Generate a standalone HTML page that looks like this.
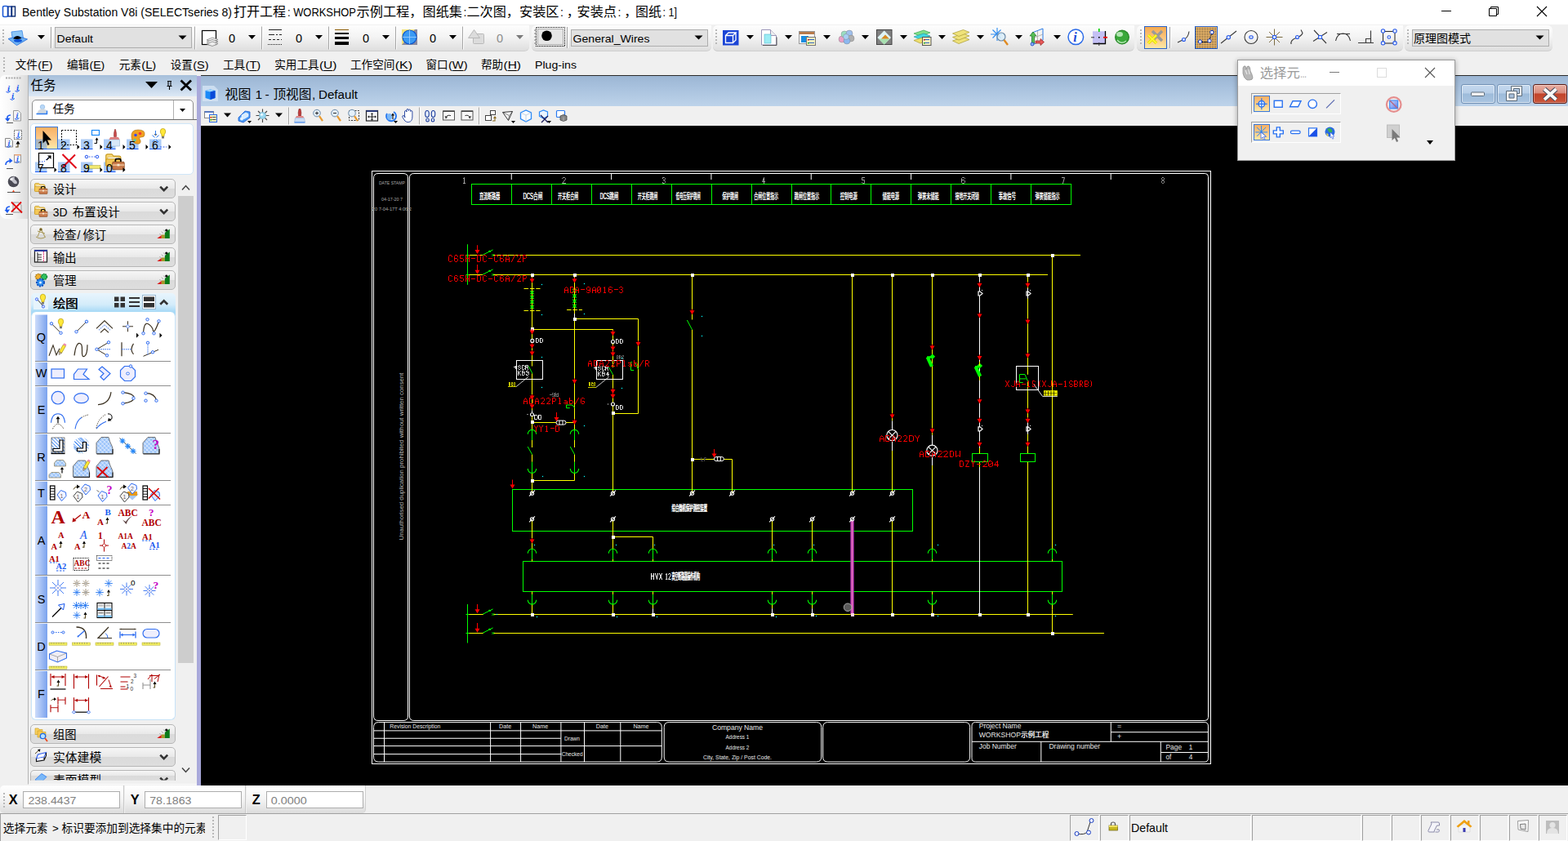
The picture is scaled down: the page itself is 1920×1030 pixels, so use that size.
<!DOCTYPE html>
<html><head><meta charset="utf-8"><title>Bentley Substation V8i</title>
<style>
html,body{margin:0;padding:0;background:#f0f0f0;}
body{width:1920px;height:1030px;overflow:hidden;position:relative;font-family:"Liberation Sans","Noto Sans CJK SC",sans-serif;}
#root{position:absolute;left:0;top:0;width:1920px;height:1030px;overflow:hidden;background:#f0f0f0;}
#root div{position:absolute;box-sizing:border-box;}
svg.L{position:absolute;left:0;top:0;pointer-events:none;overflow:hidden;font-family:"Liberation Sans","Noto Sans CJK SC",sans-serif;}
svg text{white-space:pre;}
</style></head><body><div id="root">
<div style="left:0px;top:0px;width:1920px;height:30px;background:#fff"></div>
<div style="left:0px;top:30px;width:1920px;height:63px;background:#f0f0f0"></div>
<div style="left:-6px;top:31px;width:654px;height:32px;background:linear-gradient(#fdfdfd 0%,#f4f4f4 45%,#dedede 100%);border-bottom:1px solid #cfcfcf;border-radius:0 0 6px 0"></div>
<div style="left:651px;top:31px;width:220px;height:32px;background:linear-gradient(#fdfdfd 0%,#f4f4f4 45%,#dedede 100%);border-bottom:1px solid #cfcfcf;border-radius:6px 0 6px 6px"></div>
<div style="left:873px;top:31px;width:146px;height:32px;background:linear-gradient(#fdfdfd 0%,#f4f4f4 45%,#dedede 100%);border-bottom:1px solid #cfcfcf;border-radius:6px 0 0 6px"></div>
<div style="left:873px;top:31px;width:516px;height:32px;background:linear-gradient(#fdfdfd 0%,#f4f4f4 45%,#dedede 100%);border-bottom:1px solid #cfcfcf;border-radius:6px 0 6px 6px"></div>
<div style="left:1392px;top:31px;width:326px;height:32px;background:linear-gradient(#fdfdfd 0%,#f4f4f4 45%,#dedede 100%);border-bottom:1px solid #cfcfcf;border-radius:6px 0 6px 6px"></div>
<div style="left:1720px;top:31px;width:181px;height:32px;background:linear-gradient(#fdfdfd 0%,#f4f4f4 45%,#dedede 100%);border-bottom:1px solid #cfcfcf;border-radius:6px 6px 6px 6px"></div>
<div style="left:67px;top:33px;width:168px;height:26px;background:#e1e1e1;border:1px solid #adadad;"></div>
<div style="left:699px;top:36px;width:168px;height:21px;background:#e1e1e1;border:1px solid #adadad;"></div>
<div style="left:1729px;top:36px;width:168px;height:21px;background:#e1e1e1;border:1px solid #adadad;"></div>
<svg class="L" width="1920" height="1030" viewBox="0 0 1920 1030"><g><rect x="3.5" y="7.5" width="6" height="13" rx="1.5" fill="#fff" stroke="#1e5bd8" stroke-width="1.6"/><rect x="10" y="8" width="4" height="12" fill="#fff" stroke="#123a9c" stroke-width="1.4"/><rect x="14.5" y="8" width="4" height="12" fill="#fff" stroke="#0a2a70" stroke-width="1.4"/></g><g fill="#000"><text x="27.00" y="19.60" font-size="14" textLength="257.00" lengthAdjust="spacingAndGlyphs">Bentley Substation V8i (SELECTseries 8)</text></g><g fill="#000"><text x="286.00" y="20.20" font-size="16">打开工程</text></g><g fill="#000"><text x="352.00" y="19.60" font-size="14" textLength="84.00" lengthAdjust="spacingAndGlyphs">: WORKSHOP</text></g><g fill="#000"><text x="436.50" y="20.20" font-size="16" textLength="81.00" lengthAdjust="spacingAndGlyphs">示例工程，</text></g><g fill="#000"><text x="517.50" y="20.20" font-size="16" textLength="48.50" lengthAdjust="spacingAndGlyphs">图纸集</text></g><g fill="#000"><text x="567.50" y="19.60" font-size="14">:</text></g><g fill="#000"><text x="571.50" y="20.20" font-size="16" textLength="64.50" lengthAdjust="spacingAndGlyphs">二次图，</text></g><g fill="#000"><text x="636.00" y="20.20" font-size="16" textLength="48.50" lengthAdjust="spacingAndGlyphs">安装区</text></g><g fill="#000"><text x="686.00" y="19.60" font-size="14">:</text></g><g fill="#000"><text x="693.70" y="20.20" font-size="16">，</text></g><g fill="#000"><text x="706.50" y="20.20" font-size="16" textLength="48.50" lengthAdjust="spacingAndGlyphs">安装点</text></g><g fill="#000"><text x="756.50" y="19.60" font-size="14">:</text></g><g fill="#000"><text x="764.20" y="20.20" font-size="16">，</text></g><g fill="#000"><text x="778.00" y="20.20" font-size="16">图纸</text></g><g fill="#000"><text x="811.50" y="19.60" font-size="14" textLength="17.50" lengthAdjust="spacingAndGlyphs">: 1]</text></g><path d="M1765,13.5h12" stroke="#000" stroke-width="1" fill="none"/><path d="M1823.5,10.5h9v9h-9zM1825.5,10.5v-2h9v9h-2" stroke="#000" stroke-width="1" fill="none"/><path d="M1882,8l12,12M1894,8l-12,12" stroke="#000" stroke-width="1.1" fill="none"/><rect x="3" y="36" width="2" height="2" fill="#b8b8b8"/><rect x="3" y="40" width="2" height="2" fill="#b8b8b8"/><rect x="3" y="44" width="2" height="2" fill="#b8b8b8"/><rect x="3" y="48" width="2" height="2" fill="#b8b8b8"/><rect x="3" y="52" width="2" height="2" fill="#b8b8b8"/><g><path d="M14,39l13,-1.500l1.500,9l-13,2.500z" fill="#8cc6f6" stroke="#3a86e6" stroke-width="0.800"/><path d="M10,47.500l12,-3l11.500,3.500l-13,7.500z" fill="#6eb2f2" stroke="#2a72de" stroke-width="0.900"/><path d="M16,47.500q5,-6.500 10.500,-0.500q-5,1.500 -10.500,0.500z" fill="#000"/><ellipse cx="22" cy="49.800" rx="5" ry="1.900" fill="#0a50d8"/></g><path d="M46.0,43.0h9l-4.5,5z" fill="#000"/><path d="M62.5,33v26" stroke="#a0a0a0"/><path d="M63.5,33v26" stroke="#fff"/><g fill="#000"><text x="69.50" y="51.70" font-size="13.4" textLength="44.50" lengthAdjust="spacingAndGlyphs">Default</text></g><path d="M218.5,43.5h10l-5.0,5z" fill="#000"/><path d="M238.5,32.5v28" stroke="#a6a6a6"/><path d="M239.5,32.5v28" stroke="#fff"/><path d="M320.5,32.5v28" stroke="#a6a6a6"/><path d="M321.5,32.5v28" stroke="#fff"/><path d="M402.5,32.5v28" stroke="#a6a6a6"/><path d="M403.5,32.5v28" stroke="#fff"/><path d="M484.5,32.5v28" stroke="#a6a6a6"/><path d="M485.5,32.5v28" stroke="#fff"/><path d="M566.5,32.5v28" stroke="#a6a6a6"/><path d="M567.5,32.5v28" stroke="#fff"/><g><rect x="247.5" y="37.5" width="17" height="17" fill="#fff" stroke="#000" stroke-width="1.2"/><path d="M253,49l7,-3l7,2.5l-7,3z" fill="#eee" stroke="#777" stroke-width="0.7"/><path d="M253,51.5l7,-3l7,2.5l-7,3z" fill="#eee" stroke="#777" stroke-width="0.7"/><path d="M253,54l7,-3l7,2.5l-7,3z" fill="#eee" stroke="#777" stroke-width="0.7"/></g><g stroke="#222" fill="none"><path d="M329,36.5h16" stroke-width="1"/><path d="M329,42.5h16" stroke-width="1" stroke-dasharray="7 2 2 2"/><path d="M329,48.5h16" stroke-dasharray="3 2"/><path d="M328,54.5h18" stroke-dasharray="1 1"/></g><g fill="#000"><rect x="410" y="36" width="17" height="1" fill="#8a5a00"/><rect x="410" y="40" width="17" height="2"/><rect x="410" y="45" width="17" height="3"/><rect x="410" y="51" width="17" height="4"/></g><g><path d="M492,36l19,0l0,19l-19,0z" fill="#8a8aa0"/><path d="M492,36h16l-16,19z" fill="#f2e27a"/><circle cx="501.5" cy="45.5" r="8.5" fill="#3b9af3" stroke="#0b57d0" stroke-width="1.2"/><path d="M501.5,37v17M493,45.5h17" stroke="#9fd0ff" stroke-width="0.8"/></g><g fill="#dcdcdc" stroke="#b9b9b9" stroke-width="1"><rect x="579.5" y="41.5" width="13" height="12" rx="1"/><path d="M573.5,46.5l7,-10l7,10z"/></g><g fill="#000"><text x="280.00" y="51.80" font-size="14.5">0</text></g><g fill="#000"><text x="362.00" y="51.80" font-size="14.5">0</text></g><g fill="#000"><text x="444.00" y="51.80" font-size="14.5">0</text></g><g fill="#000"><text x="526.00" y="51.80" font-size="14.5">0</text></g><g fill="#8c8c8c"><text x="608.00" y="51.80" font-size="14.5">0</text></g><path d="M304.0,43.0h9l-4.5,5z" fill="#000"/><path d="M386.0,43.0h9l-4.5,5z" fill="#000"/><path d="M468.0,43.0h9l-4.5,5z" fill="#000"/><path d="M550.0,43.0h9l-4.5,5z" fill="#000"/><path d="M632.0,43.0h9l-4.5,5z" fill="#7a7a7a"/><rect x="654" y="36" width="2" height="2" fill="#b8b8b8"/><rect x="654" y="40" width="2" height="2" fill="#b8b8b8"/><rect x="654" y="44" width="2" height="2" fill="#b8b8b8"/><rect x="654" y="48" width="2" height="2" fill="#b8b8b8"/><rect x="654" y="52" width="2" height="2" fill="#b8b8b8"/><defs><pattern id="chk" width="2" height="2" patternUnits="userSpaceOnUse"><rect width="1" height="1" fill="#000"/><rect x="1" y="1" width="1" height="1" fill="#000"/></pattern></defs><path d="M656,33h36v24h-36zM657,34v22h34v-22z" fill="url(#chk)" fill-rule="evenodd"/><rect x="658.5" y="35.5" width="31" height="19" fill="#e6e6e6" stroke="#b0b0b0"/><circle cx="669.5" cy="43.8" r="6.3" fill="#000"/><path d="M694.5,33v26" stroke="#a0a0a0"/><path d="M695.5,33v26" stroke="#fff"/><g fill="#000"><text x="701.50" y="51.80" font-size="13.4" textLength="94.00" lengthAdjust="spacingAndGlyphs">General_Wires</text></g><path d="M850.5,43.5h10l-5.0,5z" fill="#000"/></svg>
<svg class="L" width="1920" height="1030" viewBox="0 0 1920 1030"><rect x="876" y="36" width="2" height="2" fill="#b8b8b8"/><rect x="876" y="40" width="2" height="2" fill="#b8b8b8"/><rect x="876" y="44" width="2" height="2" fill="#b8b8b8"/><rect x="876" y="48" width="2" height="2" fill="#b8b8b8"/><rect x="876" y="52" width="2" height="2" fill="#b8b8b8"/><g><rect x="885" y="37" width="19.5" height="18.5" fill="#1b45d6"/><path d="M888.5,43.5h9v9h-9zM888.5,43.5l3.5,-3.5h9l-3.5,3.5M901,40v9l-3.5,3.5" fill="none" stroke="#fff" stroke-width="1.3"/></g><g><path d="M932.5,36.5h11l7,7v11.5h-18z" fill="#fff" stroke="#9a94b8"/><path d="M943.5,36.5v7h7" fill="#eee" stroke="#9a94b8"/><rect x="936" y="42" width="8" height="11" fill="#9cecf4" stroke="#55b6cc" stroke-width="0.6"/><path d="M934,55.5h17v-10" stroke="#555" fill="none"/></g><g><rect x="978.5" y="38.5" width="19" height="15" fill="#fff" stroke="#999"/><rect x="979" y="39" width="18" height="3" fill="#b87a4a"/><rect x="981" y="44" width="9" height="8" fill="#1b8de0"/><rect x="987.5" y="45.5" width="11" height="10" fill="#f7f2c0" stroke="#777"/><path d="M990,48.5h7M990,52.5h7" stroke="#2a60c0" stroke-width="1.2"/><rect x="989" y="48" width="1.5" height="1.5" fill="#e00"/><rect x="989" y="52" width="1.5" height="1.5" fill="#0a0"/></g><g stroke="#777" stroke-width="0.4"><circle cx="1031" cy="48" r="4" fill="#e9a0c8"/><circle cx="1034" cy="42" r="4" fill="#9adfc2"/><circle cx="1040" cy="41" r="4" fill="#9fc0ee"/><circle cx="1042" cy="47" r="4" fill="#b0b0b0"/><circle cx="1037" cy="50" r="4" fill="#8cb8f0"/><circle cx="1036" cy="45" r="3.5" fill="#a8d0f4"/></g><g><rect x="1073.5" y="36.5" width="18.5" height="18" fill="#808080" stroke="#444"/><path d="M1082.7,37.5l8.3,8.5l-8.3,8.5l-8.3,-8.5z" fill="#dff3f5"/><path d="M1076,47.5h13.5l-6.8,7z" fill="#a8e0b0"/><path d="M1079,47.5l5,-5l5,5z" fill="#d88a20"/></g><g><path d="M1119,41l12,-4l8,3l-12,4.5z" fill="#7fe08a" stroke="#2a9a40" stroke-width="0.6"/><path d="M1119,45l12,-4l8,3l-12,4.5z" fill="#40d8e0" stroke="#2090a0" stroke-width="0.6"/><path d="M1119,49.5l12,-4l8,3l-12,4.5z" fill="#f0e070" stroke="#a09020" stroke-width="0.6"/><rect x="1129.5" y="45.5" width="10.5" height="10" fill="#f7f2c0" stroke="#555"/><path d="M1132,48.5h6M1132,52.5h6" stroke="#2a60c0" stroke-width="1.2"/><rect x="1131" y="48" width="1.5" height="1.5" fill="#e00"/><rect x="1131" y="52" width="1.5" height="1.5" fill="#0a0"/></g><g fill="#efe27a" stroke="#a89a30" stroke-width="0.7"><path d="M1166.5,50l13,-4.5l7.5,3l-13,5z"/><path d="M1166.5,45.5l13,-4.5l7.5,3l-13,5z"/><path d="M1166.5,41l13,-4.5l7.5,3l-13,5z"/></g><g><path d="M1221,34v16M1213,42h14M1215.5,36.5l10,10M1225.5,36.5l-10,10" stroke="#2a8af0" stroke-width="1.1"/><circle cx="1226" cy="45" r="5" fill="#d8ecf8" fill-opacity=".85" stroke="#6a8aa8" stroke-width="1.2"/><path d="M1229.5,49l4.5,6" stroke="#e08a20" stroke-width="2.4"/></g><g><path d="M1264,40l13,-5v14l-13,6z" fill="#f4f4f4" stroke="#2a7ae8" stroke-width="1"/><path d="M1264,47l13,-5M1270.5,37.5v14" stroke="#999" stroke-width="0.7"/><path d="M1263.5,53v-9h-2.5l4,-5l4,5h-2.5v9z" fill="#58c058" stroke="#1a701a" stroke-width="0.7"/><path d="M1268,50h6v-2.500l4.500,4l-4.500,4v-2.500h-6z" fill="#e85a5a" stroke="#901818" stroke-width="0.7"/><circle cx="1264" cy="54" r="2" fill="#8ab0f8" stroke="#1a40c0" stroke-width="0.8"/></g><g><circle cx="1317.3" cy="45.3" r="9.3" fill="#fff" stroke="#2a6ae8" stroke-width="1.5"/><text x="1314.3" y="51" font-family="Liberation Serif" font-style="italic" font-weight="bold" font-size="16" fill="#1a48d8">i</text></g><g><rect x="1338" y="38.300" width="16" height="15" fill="#c4c0f4"/><path d="M1353.500,38v15.500h-15" stroke="#000" stroke-width="1.3" fill="none"/><path d="M1345.8,35v4" stroke="#0c0" stroke-width="1.6"/><path d="M1351,45.800h5" stroke="#e00" stroke-width="1.800"/><path d="M1336,45.800h4M1345.800,52v4" stroke="#333" stroke-width="1"/><rect x="1345" y="45" width="1.6" height="1.6" fill="#000"/></g><g><circle cx="1374" cy="45.500" r="9" fill="#2a8a2a"/><circle cx="1374" cy="45.500" r="7.500" fill="#3aa83a"/><ellipse cx="1371" cy="42" rx="4" ry="3" fill="#c8f0c8" opacity=".85"/><path d="M1368,49a7,7 0 0 0 11,1" stroke="#d0f8d0" stroke-width="1.500" fill="none" opacity=".8"/></g><path d="M914.0,43.0h9l-4.5,5z" fill="#000"/><path d="M961.0,43.0h9l-4.5,5z" fill="#000"/><path d="M1008.0,43.0h9l-4.5,5z" fill="#000"/><path d="M1055.0,43.0h9l-4.5,5z" fill="#000"/><path d="M1102.0,43.0h9l-4.5,5z" fill="#000"/><path d="M1149.0,43.0h9l-4.5,5z" fill="#000"/><path d="M1196.0,43.0h9l-4.5,5z" fill="#000"/><path d="M1243.0,43.0h9l-4.5,5z" fill="#000"/><path d="M1290.0,43.0h9l-4.5,5z" fill="#000"/><rect x="1396" y="36" width="2" height="2" fill="#b8b8b8"/><rect x="1396" y="40" width="2" height="2" fill="#b8b8b8"/><rect x="1396" y="44" width="2" height="2" fill="#b8b8b8"/><rect x="1396" y="48" width="2" height="2" fill="#b8b8b8"/><rect x="1396" y="52" width="2" height="2" fill="#b8b8b8"/><defs><linearGradient id="og" x1="0" y1="0" x2="0" y2="1"><stop offset="0" stop-color="#f5a94e"/><stop offset=".5" stop-color="#fbc57e"/><stop offset="1" stop-color="#fde9a6"/></linearGradient><pattern id="dots" width="2" height="2" patternUnits="userSpaceOnUse"><rect width="2" height="2" fill="#f8c070"/><rect width="1" height="1" fill="#3a3020"/></pattern></defs><rect x="1401.500" y="32.500" width="27" height="27" fill="url(#og)" stroke="#2a62c8"/><g><path d="M1411,38l12,12M1423,38l-12,12" stroke="#9a9a9a" stroke-width="3.500"/><path d="M1406,43l10,10M1416,43l-10,10" stroke="#e8e000" stroke-width="3.600"/><path d="M1406,43l10,10M1416,43l-10,10" stroke="#fff83a" stroke-width="1.600"/></g><path d="M1432.500,33v26" stroke="#a0a0a0"/><path d="M1433.500,33v26" stroke="#fff"/><g fill="none" stroke="#3a3a3a" stroke-width="1.100"><path d="M1442,52l7,-3.500q6,-2 7,-10"/></g><circle cx="1449.500" cy="48.500" r="2" fill="#dce8ff" stroke="#2a5ae8" stroke-width="1.100"/><rect x="1463.500" y="32.500" width="27" height="27" fill="url(#dots)" stroke="#2a62c8"/><g fill="#eef" stroke="#1a40c0" stroke-width="1"><path d="M1469,51q10,2 12,-1.500l3,-10" fill="none" stroke="#333"/><circle cx="1469.500" cy="51" r="2.200"/><circle cx="1481" cy="50" r="2.200"/><circle cx="1484" cy="39.500" r="2.200"/></g><path d="M1495,53l19,-15" stroke="#3a3a3a" stroke-width="1.100"/><circle cx="1504.300" cy="45.700" r="2.200" fill="#dce8ff" stroke="#2a5ae8" stroke-width="1.100"/><circle cx="1532" cy="45.500" r="8" fill="none" stroke="#3a3a3a" stroke-width="1.100"/><ellipse cx="1532" cy="45.500" rx="2.200" ry="1.800" fill="#dce8ff" stroke="#2a5ae8" stroke-width="1.100"/><g stroke="#7a6a40" stroke-width="1"><path d="M1560.500,35.500v20M1550.500,45.500h20M1554,39l13,13M1567,39l-13,13"/></g><rect x="1558.500" y="43.500" width="4" height="4" fill="#cfe0ff" stroke="#2a5ae8"/><path d="M1581,54q-1,-5 6,-7.500t8,-6l-2,-4" fill="none" stroke="#3a3a3a" stroke-width="1.100"/><circle cx="1588.500" cy="45.500" r="2" fill="#dce8ff" stroke="#2a5ae8" stroke-width="1.100"/><path d="M1609,37l15,16M1625,39.500l-17,11" stroke="#3a3a3a" stroke-width="1.100"/><rect x="1614.500" y="43.500" width="4" height="4" fill="#cfe0ff" stroke="#2a5ae8"/><path d="M1635.500,50q2,-9 9,-9t9,9M1637,41.500h16" fill="none" stroke="#3a3a3a" stroke-width="1.100"/><path d="M1663,52.500h19M1678.500,52.500v-15M1672.500,52.500v-5h6" fill="none" stroke="#3a3a3a" stroke-width="1.100"/><g fill="#eef4ff" stroke="#2a5ae8" stroke-width="1.100"><rect x="1693.500" y="38.500" width="14.500" height="14.500" fill="none" stroke="#333"/><circle cx="1693.500" cy="38" r="2.200"/><circle cx="1708" cy="38" r="2.200"/><circle cx="1693.500" cy="52.800" r="2.200"/><circle cx="1708" cy="52.800" r="2.200"/><circle cx="1700.800" cy="45.500" r="1.800"/></g><rect x="1723" y="36" width="2" height="2" fill="#b8b8b8"/><rect x="1723" y="40" width="2" height="2" fill="#b8b8b8"/><rect x="1723" y="44" width="2" height="2" fill="#b8b8b8"/><rect x="1723" y="48" width="2" height="2" fill="#b8b8b8"/><rect x="1723" y="52" width="2" height="2" fill="#b8b8b8"/><g fill="#000"><text x="1731.00" y="52.00" font-size="14">原理图模式</text></g><path d="M1880.5,43.5h10l-5.0,5z" fill="#000"/></svg>
<svg class="L" width="1920" height="1030" viewBox="0 0 1920 1030"><rect x="4" y="70" width="2" height="2" fill="#b8b8b8"/><rect x="4" y="74" width="2" height="2" fill="#b8b8b8"/><rect x="4" y="78" width="2" height="2" fill="#b8b8b8"/><rect x="4" y="82" width="2" height="2" fill="#b8b8b8"/><rect x="4" y="86" width="2" height="2" fill="#b8b8b8"/><g fill="#000"><text x="18.75" y="84.20" font-size="13.6">文件</text></g><g fill="#000"><text x="46.25" y="83.90" font-size="13.3" textLength="18.25" lengthAdjust="spacingAndGlyphs">(F)</text></g><path d="M51.0,86.500H59.7" stroke="#000" stroke-width="1"/><g fill="#000"><text x="82.00" y="84.20" font-size="13.6">编辑</text></g><g fill="#000"><text x="109.50" y="83.90" font-size="13.3" textLength="18.75" lengthAdjust="spacingAndGlyphs">(E)</text></g><path d="M114.2,86.500H123.6" stroke="#000" stroke-width="1"/><g fill="#000"><text x="145.75" y="84.20" font-size="13.6">元素</text></g><g fill="#000"><text x="173.25" y="83.90" font-size="13.3" textLength="18.00" lengthAdjust="spacingAndGlyphs">(L)</text></g><path d="M178.2,86.500H186.3" stroke="#000" stroke-width="1"/><g fill="#000"><text x="208.75" y="84.20" font-size="13.6">设置</text></g><g fill="#000"><text x="236.25" y="83.90" font-size="13.3" textLength="19.25" lengthAdjust="spacingAndGlyphs">(S)</text></g><path d="M241.1,86.500H250.7" stroke="#000" stroke-width="1"/><g fill="#000"><text x="273.00" y="84.20" font-size="13.6">工具</text></g><g fill="#000"><text x="300.50" y="83.90" font-size="13.3" textLength="18.75" lengthAdjust="spacingAndGlyphs">(T)</text></g><path d="M305.4,86.500H314.4" stroke="#000" stroke-width="1"/><g fill="#000"><text x="336.25" y="84.20" font-size="13.6">实用工具</text></g><g fill="#000"><text x="390.95" y="83.90" font-size="13.3" textLength="21.55" lengthAdjust="spacingAndGlyphs">(U)</text></g><path d="M396.1,86.500H407.3" stroke="#000" stroke-width="1"/><g fill="#000"><text x="429.00" y="84.20" font-size="13.6">工作空间</text></g><g fill="#000"><text x="483.70" y="83.90" font-size="13.3" textLength="21.30" lengthAdjust="spacingAndGlyphs">(K)</text></g><path d="M489.0,86.500H499.7" stroke="#000" stroke-width="1"/><g fill="#000"><text x="521.50" y="84.20" font-size="13.6">窗口</text></g><g fill="#000"><text x="549.00" y="83.90" font-size="13.3" textLength="23.50" lengthAdjust="spacingAndGlyphs">(W)</text></g><path d="M553.9,86.500H567.6" stroke="#000" stroke-width="1"/><g fill="#000"><text x="589.00" y="84.20" font-size="13.6">帮助</text></g><g fill="#000"><text x="616.50" y="83.90" font-size="13.3" textLength="21.50" lengthAdjust="spacingAndGlyphs">(H)</text></g><path d="M621.7,86.500H632.8" stroke="#000" stroke-width="1"/><g fill="#000"><text x="655.00" y="83.90" font-size="13.3" textLength="51.00" lengthAdjust="spacingAndGlyphs">Plug-ins</text></g></svg>
<div style="left:0px;top:92px;width:34px;height:176px;background:linear-gradient(90deg,#ffffff 0%,#f6f6f6 45%,#dadada 100%);border-radius:6px 0 0 8px"></div>
<div style="left:34px;top:92px;width:207px;height:869px;background:#f0f0f0;border-left:1px solid #b4b4b4;border-bottom:1px solid #fafafa"></div>
<div style="left:35px;top:92px;width:206px;height:26px;background:linear-gradient(#a6bfda 0%,#bcd0e6 45%,#dce8f5 100%)"></div>
<div style="left:35px;top:146px;width:206px;height:1px;background:#6a6a6a"></div>
<div style="left:241px;top:93px;width:5px;height:869px;background:#a9a9da"></div>
<div style="left:39px;top:122px;width:198px;height:30px;background:#fff;border:1px solid #8e8e8e;border-radius:5px;"></div>
<div style="left:39px;top:147px;width:198px;height:6px;background:#f0f0f0"></div>
<div style="left:35px;top:146px;width:206px;height:1px;background:#6a6a6a"></div>
<div style="left:212px;top:123px;width:1px;height:23px;background:#b0b0b0"></div>
<div style="left:37px;top:151px;width:200px;height:63px;background:#fff;border:1px solid #cfe6f8;border-radius:5px"></div>
<div style="left:43px;top:155px;width:28px;height:28px;background:linear-gradient(#f9b163 0%,#fbc583 45%,#fee9a8 100%);border:1px solid #3a78d8"></div>
<div style="left:37px;top:219px;width:178px;height:24px;background:linear-gradient(#f6f6f6 0%,#e9e9e9 48%,#dadada 52%,#dedede 100%);border:1px solid #b6b6b6;border-radius:5px;"></div>
<div style="left:37px;top:247px;width:178px;height:24px;background:linear-gradient(#f6f6f6 0%,#e9e9e9 48%,#dadada 52%,#dedede 100%);border:1px solid #b6b6b6;border-radius:5px;"></div>
<div style="left:37px;top:275px;width:178px;height:24px;background:linear-gradient(#f6f6f6 0%,#e9e9e9 48%,#dadada 52%,#dedede 100%);border:1px solid #b6b6b6;border-radius:5px;"></div>
<div style="left:37px;top:303px;width:178px;height:24px;background:linear-gradient(#f6f6f6 0%,#e9e9e9 48%,#dadada 52%,#dedede 100%);border:1px solid #b6b6b6;border-radius:5px;"></div>
<div style="left:37px;top:331px;width:178px;height:24px;background:linear-gradient(#f6f6f6 0%,#e9e9e9 48%,#dadada 52%,#dedede 100%);border:1px solid #b6b6b6;border-radius:5px;"></div>
<div style="left:37px;top:887px;width:178px;height:24px;background:linear-gradient(#f6f6f6 0%,#e9e9e9 48%,#dadada 52%,#dedede 100%);border:1px solid #b6b6b6;border-radius:5px;"></div>
<div style="left:37px;top:915px;width:178px;height:24px;background:linear-gradient(#f6f6f6 0%,#e9e9e9 48%,#dadada 52%,#dedede 100%);border:1px solid #b6b6b6;border-radius:5px;"></div>
<div style="left:37px;top:943px;width:178px;height:13px;background:linear-gradient(#f6f6f6 0%,#e9e9e9 48%,#dadada 52%,#dedede 100%);border:1px solid #b6b6b6;border-radius:5px;border-radius:5px 5px 0 0;border-bottom:none"></div>
<div style="left:38px;top:359px;width:177px;height:28px;background:linear-gradient(#e8f5fd 0%,#d4ecfa 50%,#a9daf6 80%,#a5d8f5 100%);border-radius:5px 5px 0 0"></div>
<div style="left:41px;top:361px;width:18px;height:18px;background:#e6f4fc;"></div>
<div style="left:174px;top:361px;width:17px;height:18px;background:#fff;border:1px solid #9ab8d0"></div>
<div style="left:38px;top:382px;width:177px;height:500px;background:#fff;border:1px solid #c6e2f7;border-radius:6px;border-top:none"></div>
<div style="left:218px;top:219px;width:19px;height:737px;background:#f0f0f0"></div>
<div style="left:218px;top:240px;width:19px;height:572px;background:#cdcdcd"></div>
<svg class="L" width="1920" height="1030" viewBox="0 0 1920 1030"><defs><pattern id="xh" width="3.500" height="3.500" patternUnits="userSpaceOnUse" patternTransform="rotate(45)"><rect width="3.500" height="3.500" fill="#9cc4fa"/><path d="M0,0h3.500M0,0v3.500" stroke="#e8f2ff" stroke-width="1.100"/></pattern><pattern id="dh" width="3" height="3" patternUnits="userSpaceOnUse" patternTransform="rotate(-45)"><rect width="3" height="3" fill="#fff"/><path d="M0,0v3" stroke="#2a7af0" stroke-width="1.600"/></pattern><linearGradient id="lc" x1="0" y1="0" x2="1" y2="0"><stop offset="0" stop-color="#cddcfa"/><stop offset="1" stop-color="#7aa2ee"/></linearGradient></defs><rect x="7.0" y="94.500" width="2" height="2" fill="#aaa"/><rect x="10.3" y="94.500" width="2" height="2" fill="#aaa"/><rect x="13.6" y="94.500" width="2" height="2" fill="#aaa"/><rect x="16.9" y="94.500" width="2" height="2" fill="#aaa"/><rect x="20.2" y="94.500" width="2" height="2" fill="#aaa"/><rect x="23.5" y="94.500" width="2" height="2" fill="#aaa"/><text x="9" y="112" font-family="Liberation Serif" font-style="italic" font-weight="bold" font-size="11" fill="#1a5af0">i</text><path d="M7.5,112.5q2.500,2.200 5.500,-1" stroke="#1a5af0" fill="none" stroke-width="1"/><text x="20" y="111" font-family="Liberation Serif" font-style="italic" font-weight="bold" font-size="11" fill="#1a5af0">i</text><path d="M18.5,111.5q2.500,2.200 5.500,-1" stroke="#1a5af0" fill="none" stroke-width="1"/><text x="14" y="121" font-family="Liberation Serif" font-style="italic" font-weight="bold" font-size="11" fill="#1a5af0">i</text><path d="M12.5,121.5q2.500,2.200 5.500,-1" stroke="#1a5af0" fill="none" stroke-width="1"/><path d="M16.500,135.500h6l3,3v9.500h-9z" fill="#f4f4f4" stroke="#999"/><text x="19.5" y="145" font-family="Liberation Serif" font-style="italic" font-weight="bold" font-size="10" fill="#1a5af0">i</text><path d="M18.0,145.5q2.500,2.200 5.500,-1" stroke="#1a5af0" fill="none" stroke-width="1"/><path d="M13,141q-5,0 -4,5" fill="none" stroke="#1a5af0" stroke-width="1.600"/><path d="M6,145l3.500,4l3,-4.500z" fill="#1a5af0"/><path d="M8,150.500h8" stroke="#555"/><rect x="17.500" y="159.500" width="9" height="11" fill="#fff" stroke="#555" stroke-dasharray="1.500 1"/><text x="21" y="168" font-family="Liberation Serif" font-style="italic" font-weight="bold" font-size="10" fill="#1a5af0">i</text><path d="M19.5,168.5q2.500,2.200 5.500,-1" stroke="#1a5af0" fill="none" stroke-width="1"/><path d="M6.500,169.500h6l3,3v7.500h-9z" fill="#f4f4f4" stroke="#888"/><text x="9.5" y="179" font-family="Liberation Serif" font-style="italic" font-weight="bold" font-size="10" fill="#1a5af0">i</text><path d="M8.0,179.5q2.500,2.200 5.500,-1" stroke="#1a5af0" fill="none" stroke-width="1"/><path d="M19,180h3v-4" fill="none" stroke="#5a4a20" stroke-width="1.200"/><path d="M19.500,176.500l2.500,-4l2.500,4z" fill="#000"/><rect x="17.500" y="189.500" width="8" height="9.500" fill="#f8f8f8" stroke="#999"/><rect x="17.500" y="189" width="8" height="1.500" fill="#e8a070"/><text x="20" y="198" font-family="Liberation Serif" font-style="italic" font-weight="bold" font-size="10" fill="#1a5af0">i</text><path d="M18.5,198.5q2.500,2.200 5.500,-1" stroke="#1a5af0" fill="none" stroke-width="1"/><path d="M7,202q0,-5 6,-5" fill="none" stroke="#1a5af0" stroke-width="1.600"/><path d="M11.500,193.500l4,3.500l-4,3z" fill="#1a5af0"/><path d="M8,206.500h8" stroke="#555"/><circle cx="16.500" cy="222.500" r="6.800" fill="#4a4a54"/><path d="M12,220q2,-4 6,-3.500q-1,3 1,4t2,4q-3,2 -5,-1t-4,-3.500z" fill="#d8d8e0" opacity=".85"/><circle cx="14" cy="219.500" r="1.800" fill="#fff" opacity=".7"/><path d="M9,235.500h16" stroke="#555"/><path d="M15,235l1.500,-2.500l1.500,2.500z" fill="#f04a20"/><path d="M16,248h7l3,3v9h-10z" fill="#eee" stroke="#999"/><path d="M12,253q-5,0 -4,5" fill="none" stroke="#1a5af0" stroke-width="1.600"/><path d="M5.500,257l3.500,4l3,-4.500z" fill="#1a5af0"/><path d="M14,247.500l13,13M26,247.500l-12,12" stroke="#e00000" stroke-width="1.800"/><path d="M7,262.500h9" stroke="#555"/><g fill="#000"><text x="37.50" y="110.00" font-size="15.5">任务</text></g><path d="M178,100h15l-7.500,8z" fill="#000"/><path d="M205,99.500h5M206,99.500v6h3v-6M204.500,105.500h6M207.500,105.500v4.500" fill="none" stroke="#000" stroke-width="1.100"/><path d="M221.500,98.500l12.500,12M234,98.500l-12.500,12" stroke="#000" stroke-width="2.800"/><g><circle cx="52" cy="131" r="2.800" fill="#b8d8f8" stroke="#7aa8d8" stroke-width="0.500"/><path d="M45,139.500l2,-4q3,-3 7,-2l3,1.500v4.500z" fill="#d0d8e0"/><path d="M44.500,139.500h13v-4" fill="none" stroke="#2a7af0" stroke-width="1.400"/></g><g fill="#000"><text x="64.40" y="138.20" font-size="13.7">任务</text></g><path d="M220.0,133.0h7l-3.500,4z" fill="#000"/><rect x="43" y="170.5" width="14.500" height="12" fill="#5a9af0" opacity=".5"/><path d="M43,182.5h14.500" stroke="#1a5af8" stroke-width="1"/><rect x="71" y="170.5" width="14.500" height="12" fill="#5a9af0" opacity=".5"/><path d="M71,182.5h14.500" stroke="#1a5af8" stroke-width="1"/><rect x="99" y="170.5" width="14.500" height="12" fill="#5a9af0" opacity=".5"/><path d="M99,182.5h14.500" stroke="#1a5af8" stroke-width="1"/><rect x="127" y="170.5" width="14.500" height="12" fill="#5a9af0" opacity=".5"/><path d="M127,182.5h14.500" stroke="#1a5af8" stroke-width="1"/><rect x="155" y="170.5" width="14.500" height="12" fill="#5a9af0" opacity=".5"/><path d="M155,182.5h14.500" stroke="#1a5af8" stroke-width="1"/><rect x="183" y="170.5" width="14.500" height="12" fill="#5a9af0" opacity=".5"/><path d="M183,182.5h14.500" stroke="#1a5af8" stroke-width="1"/><rect x="43" y="198.5" width="14.500" height="12" fill="#5a9af0" opacity=".5"/><path d="M43,210.5h14.500" stroke="#1a5af8" stroke-width="1"/><rect x="71" y="198.5" width="14.500" height="12" fill="#5a9af0" opacity=".5"/><path d="M71,210.5h14.500" stroke="#1a5af8" stroke-width="1"/><rect x="99" y="198.5" width="14.500" height="12" fill="#5a9af0" opacity=".5"/><path d="M99,210.5h14.500" stroke="#1a5af8" stroke-width="1"/><rect x="127" y="198.5" width="14.500" height="12" fill="#5a9af0" opacity=".5"/><path d="M127,210.5h14.500" stroke="#1a5af8" stroke-width="1"/><path d="M52.500,160v15.500l3.500,-3.500l2.500,6l2,-1l-2.500,-5.500h5z" fill="#000"/><rect x="75.500" y="159.500" width="18" height="18" fill="none" stroke="#000" stroke-width="1" stroke-dasharray="2 1.500"/><path d="M94.500,177l3,3l-3,3z" fill="#000"/><rect x="112.500" y="159.500" width="9" height="6" fill="#fff" stroke="#1a8af8" stroke-width="1.200"/><path d="M115.500,175.500h3v-4.500" fill="none" stroke="#000" stroke-width="1"/><path d="M116.500,171.500l2,-3l2,3z" fill="#000"/><path d="M122.500,177l3,3l-3,3z" fill="#000"/><path d="M140.500,158.500q-1.500,5 -1,9h3q0.500,-4 -1,-9z" fill="#c84a4a" stroke="#802020" stroke-width="0.500"/><path d="M135,168h10l1.500,3h-13z" fill="#e08080"/><rect x="134" y="171" width="12.500" height="8" fill="#d8e8f8" stroke="#8aa8c8" stroke-width="0.500"/><path d="M150.500,177l3,3l-3,3z" fill="#000"/><path d="M161,168q-1,-9 8,-9t8,6q0,3 -4,3t-1,4q1,5 -5,4q-5,-1 -6,-8z" fill="#f0a020" stroke="#a86a10" stroke-width="0.600"/><circle cx="166" cy="165.500" r="1.800" fill="#3a4af0"/><circle cx="171.500" cy="163.500" r="1.800" fill="#f03a3a"/><circle cx="165" cy="171.500" r="1.800" fill="#60c8a0"/><path d="M178.500,177l3,3l-3,3z" fill="#000"/><path d="M190.500,160v5M186.500,165.500l3,3M194.500,165.500l-3,3M186.500,174l3,-3M194,174l-3,-3" stroke="#2a7af0" stroke-width="1"/><path d="M189,164l1.500,2l1.500,-2" fill="none" stroke="#333" stroke-width="0.800"/><path d="M196.3,161a3.2,3.6 0 1 1 6.4,0q0,2 -1.700,4v2h-3v-2q-1.700,-2 -1.700,-4z" fill="#ffe83a" stroke="#b89a00" stroke-width="0.700"/><rect x="198.0" y="167" width="3" height="2.500" fill="#777"/><path d="M196,180h8" stroke="#2a5af0" stroke-dasharray="2 1.500"/><path d="M206.500,177l3,3l-3,3z" fill="#000"/><rect x="47.500" y="187.500" width="18" height="18" fill="#fff" stroke="#000" stroke-width="1.200"/><path d="M48,198h6l7,-7" fill="none" stroke="#2a5af0" stroke-dasharray="1.500 1.500"/><path d="M57,196l5,-5" stroke="#000" stroke-width="1.200"/><path d="M58,190.500h4.500v4.500z" fill="#000"/><path d="M66.500,205l3,3l-3,3z" fill="#000"/><path d="M76.500,189l17,17M92,189.500l-15,15" stroke="#e00018" stroke-width="2"/><path d="M106,192h14" stroke="#2a5af0" stroke-dasharray="1.500 1.500"/><circle cx="106" cy="192" r="1.800" fill="#fff" stroke="#2a5af0"/><circle cx="119" cy="192" r="1.800" fill="#fff" stroke="#2a5af0"/><rect x="106" y="202.500" width="17" height="4" fill="#f0e870" stroke="#a8a040" stroke-width="0.500"/><path d="M122.500,205l3,3l-3,3z" fill="#000"/><g transform="translate(129,186) scale(1.45)"><path d="M0.500,3.500q0,-1.500 1.500,-1.500h3.500l1.500,1.500h4.500q1.500,0 1.500,1.500v6.500h-12.500z" fill="#f8d878" stroke="#c89a20" stroke-width="0.800"/><rect x="2" y="4.500" width="9.500" height="2.500" fill="#fff" stroke="#d0a840" stroke-width="0.400"/><rect x="0.500" y="6" width="12.500" height="6" rx="1" fill="#f4c858" stroke="#c89a20" stroke-width="0.700"/><path d="M8.500,8.500v-1.500q0,-1 1,-1h2.500q1,0 1,1v1.500" fill="none" stroke="#000" stroke-width="1.200"/><rect x="6" y="8.500" width="10" height="6.500" rx="0.800" fill="#c8794a" stroke="#8a4a20" stroke-width="0.600"/><rect x="6" y="10.500" width="10" height="1.200" fill="#e8b890"/><rect x="10" y="10.200" width="2" height="1.800" fill="#f4e8d0"/></g><path d="M150.500,205l3,3l-3,3z" fill="#000"/><text x="46" y="182.5" font-size="14" fill="#000">1</text><text x="74" y="182.5" font-size="14" fill="#000">2</text><text x="102" y="182.5" font-size="14" fill="#000">3</text><text x="130" y="182.5" font-size="14" fill="#000">4</text><text x="158" y="182.5" font-size="14" fill="#000">5</text><text x="186" y="182.5" font-size="14" fill="#000">6</text><text x="46" y="210.5" font-size="14" fill="#000">7</text><text x="74" y="210.5" font-size="14" fill="#000">8</text><text x="102" y="210.5" font-size="14" fill="#000">9</text><text x="130" y="210.5" font-size="14" fill="#000">0</text><g fill="#000"><text x="65.00" y="236.60" font-size="14.3">设计</text></g><path d="M196.2,228.55l4.500,4.500l4.500,-4.500" fill="none" stroke="#333" stroke-width="2.600"/><g transform="translate(42,222.500)"><path d="M0.500,3.500q0,-1.500 1.500,-1.500h3.500l1.500,1.500h4.500q1.500,0 1.500,1.500v6.500h-12.500z" fill="#f8d878" stroke="#c89a20" stroke-width="0.800"/><rect x="2" y="4.500" width="9.500" height="2.500" fill="#fff" stroke="#d0a840" stroke-width="0.400"/><rect x="0.500" y="6" width="12.500" height="6" rx="1" fill="#f4c858" stroke="#c89a20" stroke-width="0.700"/><path d="M8.500,8.500v-1.500q0,-1 1,-1h2.500q1,0 1,1v1.500" fill="none" stroke="#000" stroke-width="1.200"/><rect x="6" y="8.500" width="10" height="6.500" rx="0.800" fill="#c8794a" stroke="#8a4a20" stroke-width="0.600"/><rect x="6" y="10.500" width="10" height="1.200" fill="#e8b890"/><rect x="10" y="10.200" width="2" height="1.800" fill="#f4e8d0"/></g><g fill="#000"><text x="64.70" y="264.60" font-size="14" textLength="17.80" lengthAdjust="spacingAndGlyphs">3D</text></g><g fill="#000"><text x="88.70" y="264.60" font-size="14.5">布置设计</text></g><path d="M196.2,256.55l4.500,4.500l4.500,-4.500" fill="none" stroke="#333" stroke-width="2.600"/><g transform="translate(42,250.500)"><path d="M0.500,3.500q0,-1.500 1.500,-1.500h3.500l1.500,1.500h4.500q1.500,0 1.500,1.500v6.500h-12.500z" fill="#f8d878" stroke="#c89a20" stroke-width="0.800"/><rect x="2" y="4.500" width="9.500" height="2.500" fill="#fff" stroke="#d0a840" stroke-width="0.400"/><rect x="0.500" y="6" width="12.500" height="6" rx="1" fill="#f4c858" stroke="#c89a20" stroke-width="0.700"/><path d="M8.500,8.500v-1.500q0,-1 1,-1h2.500q1,0 1,1v1.500" fill="none" stroke="#000" stroke-width="1.200"/><rect x="6" y="8.500" width="10" height="6.500" rx="0.800" fill="#c8794a" stroke="#8a4a20" stroke-width="0.600"/><rect x="6" y="10.500" width="10" height="1.200" fill="#e8b890"/><rect x="10" y="10.200" width="2" height="1.800" fill="#f4e8d0"/></g><g fill="#000"><text x="65.00" y="292.60" font-size="14.3">检查</text></g><g fill="#000"><text x="94.50" y="292.60" font-size="14">/</text></g><g fill="#000"><text x="101.50" y="292.60" font-size="14.3">修订</text></g><g transform="translate(192.3,280.500)"><path d="M0,11.500l5.500,-4v4z" fill="#d81818"/><path d="M5.500,11.500v-4.500h4v4.500z" fill="#a89828"/><path d="M9.500,11.500v-7l6,-4.500v11.500z" fill="#0a7a1a"/><circle cx="11.500" cy="1.500" r="1.600" fill="#000"/><path d="M3,5.500l2,2M5.500,3l2,2.500M8,1l1.500,2" stroke="#aaa" stroke-width="1"/></g><g stroke="#a89858" fill="none" stroke-width="1"><path d="M50,280l-4,10M50,280l5,10M44,290q6,4 12,0M46,283l9,3"/><circle cx="50" cy="281" r="1.500" fill="#5a4a20"/></g><g fill="#000"><text x="65.00" y="320.60" font-size="14.3">输出</text></g><g transform="translate(192.3,308.500)"><path d="M0,11.500l5.500,-4v4z" fill="#d81818"/><path d="M5.500,11.500v-4.500h4v4.500z" fill="#a89828"/><path d="M9.500,11.500v-7l6,-4.500v11.500z" fill="#0a7a1a"/><circle cx="11.500" cy="1.500" r="1.600" fill="#000"/><path d="M3,5.500l2,2M5.500,3l2,2.500M8,1l1.500,2" stroke="#aaa" stroke-width="1"/></g><rect x="42.500" y="306.500" width="15" height="14.500" fill="#fff" stroke="#222" stroke-width="1.300"/><rect x="42" y="306" width="16" height="2" fill="#2a3a9a"/><path d="M46,309v12M46,312h5M46,315h5M46,318h5" stroke="#222" stroke-width="1"/><path d="M53.500,308v13" stroke="#e01060" stroke-dasharray="1.500 1"/><g fill="#000"><text x="65.00" y="348.60" font-size="14.3">管理</text></g><g transform="translate(192.3,336.500)"><path d="M0,11.500l5.500,-4v4z" fill="#d81818"/><path d="M5.500,11.500v-4.500h4v4.500z" fill="#a89828"/><path d="M9.500,11.500v-7l6,-4.500v11.500z" fill="#0a7a1a"/><circle cx="11.500" cy="1.500" r="1.600" fill="#000"/><path d="M3,5.500l2,2M5.500,3l2,2.500M8,1l1.500,2" stroke="#aaa" stroke-width="1"/></g><circle cx="47" cy="339" r="3.500" fill="#f0b030" stroke="#a87810" stroke-dasharray="1.500 1" stroke-width="1.500"/><circle cx="54" cy="339" r="3.500" fill="#30c060" stroke="#108030" stroke-dasharray="1.500 1" stroke-width="1.500"/><circle cx="49.500" cy="346" r="4.500" fill="#3090f0" stroke="#1050c0" stroke-dasharray="2 1.200" stroke-width="2"/><circle cx="49.500" cy="346" r="1.500" fill="#e8f0ff"/><g fill="#000"><text x="65.00" y="904.60" font-size="14.3">组图</text></g><g transform="translate(192.3,892.500)"><path d="M0,11.500l5.500,-4v4z" fill="#d81818"/><path d="M5.500,11.500v-4.500h4v4.500z" fill="#a89828"/><path d="M9.500,11.500v-7l6,-4.500v11.500z" fill="#0a7a1a"/><circle cx="11.500" cy="1.500" r="1.600" fill="#000"/><path d="M3,5.500l2,2M5.500,3l2,2.500M8,1l1.500,2" stroke="#aaa" stroke-width="1"/></g><path d="M43,892h4l1,1.500h4v6h-9z" fill="#f8d060" stroke="#c89a20" stroke-width="0.600"/><path d="M46,895h4l1,1.500h5v6.500h-10z" fill="#f8c850" stroke="#c89a20" stroke-width="0.600"/><circle cx="52.500" cy="901.500" r="3.200" fill="#b8e0ff" stroke="#1a6ae8" stroke-width="1.300"/><path d="M55,904l3,4" stroke="#e84a20" stroke-width="1.800"/><g fill="#000"><text x="65.00" y="932.60" font-size="14.8">实体建模</text></g><path d="M196.2,924.55l4.500,4.500l4.500,-4.500" fill="none" stroke="#333" stroke-width="2.600"/><path d="M44.500,929l2,-5l10,-2.500l-2.500,5.500z" fill="#fff" stroke="#2a5af0" stroke-width="1.100"/><path d="M44.500,929v3.500l9.500,-1.500v-3.500M54,931l2.500,-5.500v-3.500" fill="#f4f4ff" stroke="#111" stroke-width="1.100"/><path d="M43,923l5,-4.500" stroke="#5a4a20" stroke-width="1"/><path d="M46,918l3.500,-0.500l-1,3.500z" fill="#000"/><clipPath id="cpl"><rect x="36" y="943" width="182" height="12.500"/></clipPath><g clip-path="url(#cpl)"><g fill="#000"><text x="65.00" y="960.60" font-size="14.8">表面模型</text></g><path d="M196.2,952.55l4.500,4.500l4.500,-4.500" fill="none" stroke="#333" stroke-width="2.600"/><path d="M43,955l8,-7.500l6,4l-8,8z" fill="#7ab8f8" stroke="#2a7af0" stroke-width="0.800"/></g><path d="M45.500,366.500l8,9" stroke="#3a3020" stroke-width="1"/><circle cx="45" cy="366.500" r="1.600" fill="#eef" stroke="#2a5af0" stroke-width="0.900"/><circle cx="53" cy="375.500" r="1.600" fill="#eef" stroke="#2a5af0" stroke-width="0.900"/><path d="M49.3,364a2.400,2.800 0 1 1 6.400,0q0,2 -1.700,4v2h-3v-2q-1.700,-2 -1.700,-4z" fill="#ffe83a" stroke="#b89a00" stroke-width="0.700"/><rect x="51.0" y="370" width="3" height="2.500" fill="#777"/><g fill="#000"><text x="64.70" y="377.30" font-size="15.3">绘图</text></g><g fill="#000"><text x="65.20" y="377.30" font-size="15.3">绘图</text></g><g fill="#333"><rect x="140" y="363.500" width="5.500" height="5.500"/><rect x="147.500" y="363.500" width="5.500" height="5.500"/><rect x="140" y="371" width="5.500" height="5.500"/><rect x="147.500" y="371" width="5.500" height="5.500"/><rect x="158" y="364" width="13" height="2"/><rect x="158" y="369" width="13" height="2"/><rect x="158" y="374" width="13" height="2"/><rect x="176" y="363.500" width="13" height="5.500"/><rect x="176" y="371" width="13" height="5.500"/></g><path d="M196.2,372.75l4.500,-4.500l4.500,4.500" fill="none" stroke="#333" stroke-width="2.600"/><rect x="43" y="385.500" width="15" height="493.500" fill="url(#lc)"/><path d="M43,442.500H209" stroke="#8e8e8e" stroke-width="1"/><path d="M43,443.500H58" stroke="#e8f0ff" stroke-width="1"/><path d="M43,472.500H209" stroke="#8e8e8e" stroke-width="1"/><path d="M43,473.500H58" stroke="#e8f0ff" stroke-width="1"/><path d="M43,530.500H209" stroke="#8e8e8e" stroke-width="1"/><path d="M43,531.500H58" stroke="#e8f0ff" stroke-width="1"/><path d="M43,588.500H209" stroke="#8e8e8e" stroke-width="1"/><path d="M43,589.500H58" stroke="#e8f0ff" stroke-width="1"/><path d="M43,618.500H209" stroke="#8e8e8e" stroke-width="1"/><path d="M43,619.500H58" stroke="#e8f0ff" stroke-width="1"/><path d="M43,704.500H209" stroke="#8e8e8e" stroke-width="1"/><path d="M43,705.500H58" stroke="#e8f0ff" stroke-width="1"/><path d="M43,762.500H209" stroke="#8e8e8e" stroke-width="1"/><path d="M43,763.500H58" stroke="#e8f0ff" stroke-width="1"/><path d="M43,820.500H209" stroke="#8e8e8e" stroke-width="1"/><path d="M43,821.500H58" stroke="#e8f0ff" stroke-width="1"/><text x="50.500" y="418.2" font-size="14.500" text-anchor="middle" fill="#000">Q</text><text x="50.500" y="462.2" font-size="14.500" text-anchor="middle" fill="#000">W</text><text x="50.500" y="507.2" font-size="14.500" text-anchor="middle" fill="#000">E</text><text x="50.500" y="565.2" font-size="14.500" text-anchor="middle" fill="#000">R</text><text x="50.500" y="609.2" font-size="14.500" text-anchor="middle" fill="#000">T</text><text x="50.500" y="667.2" font-size="14.500" text-anchor="middle" fill="#000">A</text><text x="50.500" y="739.2" font-size="14.500" text-anchor="middle" fill="#000">S</text><text x="50.500" y="797.2" font-size="14.500" text-anchor="middle" fill="#000">D</text><text x="50.500" y="855.2" font-size="14.500" text-anchor="middle" fill="#000">F</text><g transform="translate(71,399.8)"><path d="M-8,-3.500L3.500,8" stroke="#3a3020" stroke-width="1"/><circle cx="-8" cy="-3.500" r="1.700" fill="#f2f2ff" stroke="#2f6df0" stroke-width="1"/><circle cx="3.500" cy="8" r="1.700" fill="#f2f2ff" stroke="#2f6df0" stroke-width="1"/><path d="M0.2999999999999998,-6a3.200,3.600 0 1 1 6.400,0q0,2 -1.700,4v2h-3v-2q-1.700,-2 -1.700,-4z" fill="#ffe83a" stroke="#b89a00" stroke-width="0.700"/><rect x="2.0" y="0" width="3" height="2.500" fill="#777"/></g><g transform="translate(99.500,399.8)"><path d="M-6,6.500L6.500,-6" stroke="#3a3020" stroke-width="1"/><circle cx="-6" cy="6.500" r="1.700" fill="#f2f2ff" stroke="#2f6df0" stroke-width="1"/><circle cx="6.500" cy="-6" r="1.700" fill="#f2f2ff" stroke="#2f6df0" stroke-width="1"/></g><g transform="translate(128,399.8)"><path d="M-10,2.500L0,-7l10,9.500M-5,7.500L0,3l5,4.500" fill="none" stroke="#3a3020" stroke-width="1.100"/><path d="M-7,4.500L0,-2l7,6.500" fill="none" stroke="#2f6df0" stroke-width="1" stroke-dasharray="1.500 1"/></g><g transform="translate(156.500,399.8)"><path d="M0,-6.500v13M-6.500,0h13" stroke="#3a3020" stroke-width="1"/><path d="M0,-2.200l2.200,2.200l-2.200,2.200l-2.200,-2.200z" fill="#f4f4ff" stroke="#2f6df0" stroke-width="0.800"/><path d="M10.500,8l3,3l-3,3z" fill="#000"/></g><g transform="translate(185,399.8)"><path d="M-9.500,8q1,-14 6,-11t6,8t7,-11" fill="none" stroke="#3a3020" stroke-width="1.200"/><circle cx="-9.500" cy="8.500" r="1.700" fill="#f2f2ff" stroke="#2f6df0" stroke-width="1"/><circle cx="-4.500" cy="-8.500" r="1.700" fill="#f2f2ff" stroke="#2f6df0" stroke-width="1"/><circle cx="3.500" cy="8.500" r="1.700" fill="#f2f2ff" stroke="#2f6df0" stroke-width="1"/><circle cx="9.500" cy="-6.500" r="1.700" fill="#f2f2ff" stroke="#2f6df0" stroke-width="1"/><path d="M10.500,8l3,3l-3,3z" fill="#000"/></g><g transform="translate(71,427.8)"><path d="M-11,8l5,-13l4,12l4,-8" fill="none" stroke="#3a3020" stroke-width="1.100"/><g transform="translate(4,2) rotate(30)"><rect x="-1.700" y="-8" width="3.400" height="10" fill="#ffe83a" stroke="#8a7a00" stroke-width="0.500"/><rect x="-1.700" y="-10" width="3.400" height="2.200" fill="#f08ab0"/><path d="M-1.700,2l1.700,3.500l1.700,-3.500z" fill="#d8b890" stroke="#444" stroke-width="0.400"/></g></g><g transform="translate(99.500,427.8)"><path d="M-8.500,7.500q2,-15 6,-15t3.500,9t3,7t3.500,-14" fill="none" stroke="#3a3020" stroke-width="1.200"/></g><g transform="translate(128,427.8)"><path d="M5,-8.500L-9.500,0L3,7.500" fill="none" stroke="#3a3020" stroke-width="1"/><path d="M-9.500,0H7" stroke="#2f6df0" stroke-dasharray="1.500 1" stroke-width="1"/><circle cx="5" cy="-8.500" r="1.700" fill="#f2f2ff" stroke="#2f6df0" stroke-width="1"/><circle cx="-9.500" cy="0" r="1.700" fill="#f2f2ff" stroke="#2f6df0" stroke-width="1"/><circle cx="3" cy="7.500" r="1.700" fill="#f2f2ff" stroke="#2f6df0" stroke-width="1"/></g><g transform="translate(156.500,427.8)"><path d="M-7.500,-8.500v17M7,-7q-5,7 0,13" fill="none" stroke="#3a3020" stroke-width="1.200"/><path d="M-7.500,0H4" stroke="#2f6df0" stroke-dasharray="1.500 1" stroke-width="1"/></g><g transform="translate(185,427.8)"><path d="M-9.500,8.500L9,0.500" stroke="#3a3020" stroke-width="1"/><path d="M-4,-7.500v14" stroke="#2f6df0" stroke-dasharray="1.500 1" stroke-width="1"/><circle cx="-4" cy="-8" r="1.700" fill="#f2f2ff" stroke="#2f6df0" stroke-width="1"/><circle cx="2" cy="3.500" r="1.700" fill="#f2f2ff" stroke="#2f6df0" stroke-width="1"/></g><g transform="translate(71,457.500)"><rect x="-8" y="-5.500" width="15.500" height="11" fill="#eeeefd" stroke="#2f6df0" stroke-width="1.200"/></g><g transform="translate(99.500,457.500)"><path d="M-9,7v-6l5,-6.500h11l-4.500,6.500l7,6z" fill="#eeeefd" stroke="#2f6df0" stroke-width="1.200"/></g><g transform="translate(128,457.500)"><path d="M-3,-8.500l10,8.500l-8,8l-4,-4l4,-4l-6,-5z" fill="#eeeefd" stroke="#2f6df0" stroke-width="1.200"/></g><g transform="translate(156.500,457.500)"><path d="M-4,-9h8l5,5v8l-5,5h-8l-5,-5v-8z" fill="#eeeefd" stroke="#2f6df0" stroke-width="1.200"/><ellipse cx="0" cy="0" rx="2" ry="1.500" fill="#fff" stroke="#2f6df0" stroke-width="0.900"/><circle cx="3.500" cy="-9" r="1.700" fill="#f2f2ff" stroke="#2f6df0" stroke-width="1"/></g><g transform="translate(71,487.2)"><circle cx="0" cy="0" r="7.800" fill="#eeeefd" stroke="#2f6df0" stroke-width="1.200"/></g><g transform="translate(99.500,487.2)"><ellipse cx="0" cy="0.500" rx="8.800" ry="6" fill="#eeeefd" stroke="#2f6df0" stroke-width="1.200"/></g><g transform="translate(128,487.2)"><path d="M-8,8.500q14,-1 16,-15.500" fill="none" stroke="#3a3020" stroke-width="1.200"/></g><g transform="translate(156.500,487.2)"><path d="M-5.500,-6.500q13,1.500 13,6.500t-13,7" fill="none" stroke="#3a3020" stroke-width="1.200"/><circle cx="-6" cy="-6.500" r="1.700" fill="#f2f2ff" stroke="#2f6df0" stroke-width="1"/><circle cx="7" cy="0.500" r="1.700" fill="#f2f2ff" stroke="#2f6df0" stroke-width="1"/><circle cx="-6" cy="7" r="1.700" fill="#f2f2ff" stroke="#2f6df0" stroke-width="1"/></g><g transform="translate(185,487.2)"><path d="M-6,-5.500q10,0 13,9" fill="none" stroke="#3a3020" stroke-width="1.200"/><circle cx="-6.500" cy="-5.500" r="1.700" fill="#f2f2ff" stroke="#2f6df0" stroke-width="1"/><circle cx="-6.500" cy="3.500" r="1.700" fill="#f2f2ff" stroke="#2f6df0" stroke-width="1"/><circle cx="6.500" cy="3.500" r="1.700" fill="#f2f2ff" stroke="#2f6df0" stroke-width="1"/></g><g transform="translate(71,516.3)"><path d="M-8.500,1.500q1,-11 8.500,-11t8.500,11" fill="none" stroke="#2f6df0" stroke-width="1.100"/><path d="M-6.500,9q3,-6 6.500,-6t7,6" fill="none" stroke="#3a3020" stroke-width="1" stroke-dasharray="1.200 1.200"/><path d="M0,2v-6" stroke="#000" stroke-width="1.200"/><path d="M-2.500,-3l2.500,-3.500l2.500,3.500z" fill="#000"/></g><g transform="translate(99.500,516.3)"><path d="M-7.500,9q1.500,-10 8,-14" fill="none" stroke="#2f6df0" stroke-width="1.100"/><path d="M0.500,-5q4,-2.500 9,-3.500" fill="none" stroke="#3a3020" stroke-width="1" stroke-dasharray="1.200 1.200"/></g><g transform="translate(128,516.3)"><path d="M-10,9q4,-6 12,-9" fill="none" stroke="#2f6df0" stroke-width="1.100"/><path d="M-10,8q2,-12 12,-17" fill="none" stroke="#3a3020" stroke-width="1" stroke-dasharray="1.200 1.200"/><path d="M4,-9.500q6,0 5,6l-2,1" fill="none" stroke="#000" stroke-width="1"/><path d="M4,-0.500l1,-4l3.500,3.500z" fill="#000"/></g><g transform="translate(71,545.500)"><rect x="-8" y="-9.500" width="16" height="19" fill="url(#dh)" stroke="#333" stroke-width="0.600"/><path d="M2,-6.500h4v14h-12v-3.500h8z" fill="#fff" stroke="#000" stroke-width="1.200"/><path d="M-8.500,10h17" stroke="#000" stroke-width="1.300"/></g><g transform="translate(99.500,545.500)"><circle cx="0" cy="0" r="9.800" fill="#fff"/><circle cx="0" cy="0" r="9.800" fill="url(#dh)" opacity=".85"/><path d="M-8,-5l10,10M-2,-9.500l10,10M-9,1l8,8" stroke="#2a7af0" stroke-width="1"/><path d="M2,-4h4v11h-11v-3.500h7z" fill="#fff" stroke="#000" stroke-width="1.200"/></g><g transform="translate(128,545.500)"><path d="M-10,10v-13l6,-7h9q1.500,6 3,8.500t2,5.500v6z" fill="url(#xh)" stroke="#555" stroke-width="0.800"/><path d="M-9.500,10.500h19.500v-6" fill="none" stroke="#222" stroke-width="1.200"/></g><g transform="translate(156.500,545.500)"><path d="M-10,-9L10,10" stroke="#3a3020" stroke-width="0.900"/><path d="M-6.500,-9.0v7.0M-10.0,-5.500h7.0M-8.95,-7.949999999999999l4.8999999999999995,4.8999999999999995M-4.050000000000001,-7.949999999999999l-4.8999999999999995,4.8999999999999995" stroke="#2a8af8" stroke-width="1.200" fill="none"/><path d="M0,-2.500v7.0M-3.500,1h7.0M-2.4499999999999997,-1.4499999999999997l4.8999999999999995,4.8999999999999995M2.4499999999999997,-1.4499999999999997l-4.8999999999999995,4.8999999999999995" stroke="#2a8af8" stroke-width="1.200" fill="none"/><path d="M6.500,3.500v7.0M3.0,7h7.0M4.050000000000001,4.550000000000001l4.8999999999999995,4.8999999999999995M8.95,4.550000000000001l-4.8999999999999995,4.8999999999999995" stroke="#2a8af8" stroke-width="1.200" fill="none"/></g><g transform="translate(185,545.500)"><path d="M-10,10v-13l6,-7h9q1.500,6 3,8.500t2,5.500v6z" fill="url(#xh)" stroke="#555" stroke-width="0.800"/><path d="M-9.500,10.500h19.500v-6" fill="none" stroke="#222" stroke-width="1.200"/><text x="1.500" y="4.500" font-family="Liberation Serif" font-weight="bold" font-size="17" fill="#c400c4">?</text></g><g transform="translate(71,574)"><path d="M-4.500,-3v-4l3,-3.500h8l3,4v3.500z" fill="url(#xh)" stroke="#8a7a50" stroke-width="0.700"/><path d="M-11,11v-3.500l3,-3h9l2.500,3v3.500z" fill="url(#xh)" stroke="#8a7a50" stroke-width="0.700"/><path d="M5,5.500v-5" stroke="#000" stroke-width="1.200"/><path d="M2.800,1l2.200,-3l2.200,3z" fill="#000"/></g><g transform="translate(99.500,574)"><path d="M-10,10v-13l6,-7h9q1.500,6 3,8.500t2,5.500v6z" fill="url(#xh)" stroke="#555" stroke-width="0.800"/><path d="M-9.500,10.500h19.500v-6" fill="none" stroke="#222" stroke-width="1.200"/><g transform="translate(5,-2) rotate(30)"><rect x="-1.700" y="-8" width="3.400" height="10" fill="#ffe83a" stroke="#8a7a00" stroke-width="0.500"/><rect x="-1.700" y="-10" width="3.400" height="2.200" fill="#f08ab0"/><path d="M-1.700,2l1.700,3.500l1.700,-3.500z" fill="#d8b890" stroke="#444" stroke-width="0.400"/></g></g><g transform="translate(128,574)"><path d="M-10,10v-13l6,-7h9q1.500,6 3,8.500t2,5.500v6z" fill="url(#xh)" stroke="#555" stroke-width="0.800"/><path d="M-9.500,10.500h19.500v-6" fill="none" stroke="#222" stroke-width="1.200"/><path d="M-9,-2L4.500,10.500M3.500,-2L-9,10.500" stroke="#d80000" stroke-width="1.800"/></g><g transform="translate(71,603.500)"><rect x="-9.500" y="-8.500" width="5.500" height="17" fill="#fff" stroke="#000" stroke-width="1.200"/><path d="M-9.500,-5h5.500M-9.500,-1.700h5.500M-9.500,1.700h5.500M-9.500,5h5.500" stroke="#000" stroke-width="0.900"/><path d="M-1.0,2.500l4.500,-5.500l6,2.500l0.500,4.500l-5.500,6z" fill="#f4f4ff" stroke="#2f6df0" stroke-width="1"/><text x="2.500" y="6" font-size="7" fill="#666">1</text></g><g transform="translate(99.500,603.500)"><path d="M-9.500,4.0l4.500,-5.500l6,2.500l0.500,4.500l-5.500,6z" fill="#f4f4f4" stroke="#444" stroke-width="1"/><text x="-6" y="7.500" font-size="7" fill="#666">1</text><path d="M0.0,-5.0l4.500,-5.500l6,2.500l0.500,4.500l-5.500,6z" fill="#f4f4ff" stroke="#2f6df0" stroke-width="1"/><text x="3.500" y="-1.500" font-size="7" fill="#666">2</text><path d="M-9.500,-4q1,-3.500 5,-3.500" fill="none" stroke="#5a4a20" stroke-width="1"/><path d="M-5.500,-10l4,2.500l-4,2.500z" fill="#000"/></g><g transform="translate(128,603.500)"><path d="M-8.0,3.500l4.500,-5.500l6,2.500l0.500,4.500l-5.500,6z" fill="#f4f4ff" stroke="#2f6df0" stroke-width="1"/><text x="-4.500" y="7" font-size="7" fill="#666">1</text><path d="M-9.500,-3l3,2" stroke="#444" stroke-width="0.800"/><text x="2.500" y="1.500" font-family="Liberation Serif" font-weight="bold" font-size="14" fill="#c400c4">?</text></g><g transform="translate(156.500,603.500)"><path d="M-2,2l7.500,-7l7.500,7l-7.500,7z" fill="#a8c8f8"/><path d="M-0.500,-1.500h12v5h-12z" fill="#e89a18"/><path d="M-9.500,4.0l4.500,-5.500l6,2.500l0.500,4.500l-5.500,6z" fill="#f4f4f4" stroke="#444" stroke-width="1"/><text x="-6" y="7.500" font-size="7" fill="#666">1</text><path d="M0.0,-6.0l4.500,-5.500l6,2.500l0.500,4.500l-5.500,6z" fill="#f4f4ff" stroke="#2f6df0" stroke-width="1"/><text x="3.500" y="-2.500" font-size="7" fill="#666">2</text><path d="M-9.500,-4q1,-3.500 5,-3.500" fill="none" stroke="#5a4a20" stroke-width="1"/><path d="M-5.500,-10l4,2.500l-4,2.500z" fill="#000"/></g><g transform="translate(185,603.500)"><rect x="-10" y="-8.500" width="5.500" height="17" fill="#fff" stroke="#000" stroke-width="1.200"/><path d="M-10,-5h5.500M-10,-1.700h5.500M-10,1.700h5.500M-10,5h5.500" stroke="#000" stroke-width="0.900"/><path d="M-0.500,2.500l4.500,-5.500l6,2.500l0.500,4.500l-5.500,6z" fill="#dce8ff" stroke="#2f6df0" stroke-width="1"/><text x="3" y="6" font-size="7" fill="#666"></text><path d="M-3,-5.500L11,8M9.500,-5.500L-3,7" stroke="#d80000" stroke-width="1.600"/></g><g transform="translate(71,633)"><text x="-8.500" y="8" font-family="Liberation Serif" font-weight="bold" font-size="24" fill="#b00000">A</text></g><g transform="translate(99.500,633)"><text x="1" y="1.500" font-family="Liberation Serif" font-weight="bold" font-size="13.500" fill="#b00000">A</text><path d="M-0.500,-2.500l-9.500,7.500" stroke="#b00000" stroke-width="1.300"/><path d="M-11,6.500l1,-5.500l4,4z" fill="#b00000"/></g><g transform="translate(128,633)"><text x="-9" y="10" font-family="Liberation Serif" font-weight="bold" font-size="11" fill="#b00000">A</text><text x="0.500" y="-2" font-family="Liberation Serif" font-weight="bold" font-size="11" fill="#1a5af0">B</text><path d="M1.500,8h2v-4" fill="none" stroke="#5a4a20" stroke-width="1.100"/><path d="M1.500,4l2,-3.500l2,3.500z" fill="#000"/></g><g transform="translate(156.500,633)"><text x="-12" y="-1.500" font-family="Liberation Serif" font-weight="bold" font-size="11.500" fill="#b00000">ABC</text><path d="M-6.500,3.500l4.500,5.500q2,-6 7.500,-10q-5,2 -8,7z" fill="#5a4040"/></g><g transform="translate(185,633)"><text x="-11.500" y="10.500" font-family="Liberation Serif" font-weight="bold" font-size="11.500" fill="#b00000">ABC</text><text x="-3" y="-1" font-family="Liberation Serif" font-weight="bold" font-size="13" fill="#c400c4">?</text></g><g transform="translate(71,661.6)"><text x="-8.500" y="11" font-family="Liberation Serif" font-weight="bold" font-size="10.500" fill="#b00000">A</text><text x="0" y="-3" font-family="Liberation Serif" font-weight="bold" font-size="10.500" fill="#b00000">A</text><path d="M1.500,8.500h2v-4" fill="none" stroke="#5a4a20" stroke-width="1.100"/><path d="M1.500,4.500l2,-3.500l2,3.500z" fill="#000"/></g><g transform="translate(99.500,661.6)"><text x="-8.500" y="11" font-family="Liberation Serif" font-weight="bold" font-size="10.500" fill="#b00000">A</text><text x="-1.500" y="-1.500" font-family="Liberation Serif" font-style="italic" font-size="14" fill="#1a5af0">A</text><path d="M1.500,8.500h2v-4" fill="none" stroke="#5a4a20" stroke-width="1.100"/><path d="M1.500,4.500l2,-3.500l2,3.500z" fill="#000"/></g><g transform="translate(128,661.6)"><text x="-8" y="-1.500" font-family="Liberation Serif" font-weight="bold" font-size="11.500" fill="#b00000">1</text><path d="M-0.500,-1v15M-6,6.500h11" stroke="#b00000" stroke-width="1"/><path d="M-0.500,4l2.500,2.500l-2.500,2.500l-2.500,-2.500z" fill="#fff" stroke="#b00000" stroke-width="0.900"/></g><g transform="translate(156.500,661.6)"><text x="-12" y="-1.500" font-family="Liberation Serif" font-weight="bold" font-size="9.500" fill="#b00000">A1A</text><text x="-8" y="10" font-family="Liberation Serif" font-weight="bold" font-size="9.500" fill="#b00000">A</text><text x="-1.300" y="10" font-family="Liberation Serif" font-weight="bold" font-size="9.500" fill="#1a5af0">2</text><text x="3.500" y="10" font-family="Liberation Serif" font-weight="bold" font-size="9.500" fill="#b00000">A</text></g><g transform="translate(185,661.6)"><text x="-11" y="-1" font-family="Liberation Serif" font-weight="bold" font-size="10.500" fill="#b00000">A1</text><text x="-2" y="9" font-family="Liberation Serif" font-weight="bold" font-size="10.500" fill="#1a5af0">A1</text><path d="M-11,0.500h10" stroke="#1a5af0" stroke-dasharray="2.500 1.500" stroke-width="1"/><path d="M-2,11h10" stroke="#1a5af0" stroke-dasharray="2.500 1.500" stroke-width="1"/></g><g transform="translate(71,689.500)"><text x="-11" y="-2" font-family="Liberation Serif" font-weight="bold" font-size="10.500" fill="#b00000">A1</text><text x="-2.500" y="7.500" font-family="Liberation Serif" font-weight="bold" font-size="10.500" fill="#1a5af0">A2</text><path d="M-10,-0.500h9" stroke="#1a5af0" stroke-dasharray="2.500 1.500" stroke-width="1"/><path d="M-2,9.500h10" stroke="#1a5af0" stroke-dasharray="2.500 1.500" stroke-width="1"/></g><g transform="translate(99.500,689.500)"><rect x="-9.500" y="-6" width="18.500" height="15" fill="none" stroke="#000" stroke-width="1" stroke-dasharray="1 1"/><text x="-9" y="3" font-family="Liberation Serif" font-weight="bold" font-size="9.500" fill="#b00000">ABC</text><path d="M-8,6.500h16" stroke="#b00000" stroke-dasharray="2.500 1.500" stroke-width="1"/></g><g transform="translate(128,689.500)"><rect x="-9.500" y="-9" width="18.500" height="6" fill="none" stroke="#000" stroke-width="0.900" stroke-dasharray="1 1"/><path d="M-7.500,-6h15" stroke="#1a5af0" stroke-dasharray="3 2" stroke-width="1.100"/><path d="M-7.500,0.500h15M-7.500,6.500h15" stroke="#000" stroke-dasharray="3 2" stroke-width="1.100"/></g><g transform="translate(71,720)"><path d="M0,-10v20M-10,0h20M-7.0,-7.0l14.0,14.0M7.0,-7.0l-14.0,14.0" stroke="#2f6df0" stroke-width="0.900" fill="none"/><path d="M0,-4.500l4.500,4.500l-4.500,4.500l-4.500,-4.500z" fill="#f4f0f8" stroke="#2f6df0" stroke-width="0.600"/><circle cx="0" cy="0" r="0.700" fill="#14c"/></g><g transform="translate(99.500,720)"><path d="M-5.500,-10.0v9.0M-10.0,-5.500h9.0M-8.65,-8.65l6.300,6.300M-2.35,-8.65l-6.300,6.300" stroke="#9a8a70" stroke-width="0.900" fill="none"/><path d="M5.500,-10.0v9.0M1.0,-5.500h9.0M2.35,-8.65l6.300,6.300M8.65,-8.65l-6.300,6.300" stroke="#9a8a70" stroke-width="0.900" fill="none"/><path d="M-5.500,1.0v9.0M-10.0,5.500h9.0M-8.65,2.35l6.300,6.300M-2.35,2.35l-6.300,6.300" stroke="#2a7af0" stroke-width="0.900" fill="none"/><path d="M5.500,1.0v9.0M1.0,5.500h9.0M2.35,2.35l6.300,6.300M8.65,2.35l-6.300,6.300" stroke="#9a8a70" stroke-width="0.900" fill="none"/><circle cx="5.500" cy="5.500" r="1.500" fill="#aaa"/><circle cx="5.500" cy="-5.500" r="1.300" fill="#bbb"/><circle cx="-5.500" cy="-5.500" r="1.300" fill="#bbb"/></g><g transform="translate(128,720)"><path d="M5,-10.3v9.600M0.20000000000000018,-5.500h9.600M1.6400000000000001,-8.86l6.72,6.72M8.36,-8.86l-6.72,6.72" stroke="#2a7af0" stroke-width="0.900" fill="none"/><path d="M-6,0.7000000000000002v9.600M-10.8,5.500h9.600M-9.36,2.14l6.72,6.72M-2.64,2.14l-6.72,6.72" stroke="#2a7af0" stroke-width="0.900" fill="none"/><path d="M3.0,9.500h2v-4" fill="none" stroke="#5a4a20" stroke-width="1.100"/><path d="M3.0,5.500l2,-3.500l2,3.500z" fill="#000"/></g><g transform="translate(156.500,720)"><path d="M-1.500,-6.500v16M-9.500,1.500h16M-7.100,-4.100l11.200,11.200M4.100,-4.100l-11.200,11.200" stroke="#2f6df0" stroke-width="0.900" fill="none"/><path d="M-1.500,-2.100l3.600,3.600l-3.600,3.600l-3.600,-3.600z" fill="#f4f0f8" stroke="#2f6df0" stroke-width="0.600"/><circle cx="-1.500" cy="1.500" r="0.700" fill="#14c"/><text x="3.500" y="-3" font-size="10" fill="#000">o</text></g><g transform="translate(185,720)"><path d="M-2,-4.0v15.0M-9.500,3.500h15.0M-7.25,-1.75l10.500,10.500M3.25,-1.75l-10.500,10.500" stroke="#2f6df0" stroke-width="0.900" fill="none"/><path d="M-2,0.125l3.375,3.375l-3.375,3.375l-3.375,-3.375z" fill="#f4f0f8" stroke="#2f6df0" stroke-width="0.600"/><circle cx="-2" cy="3.500" r="0.700" fill="#14c"/><text x="2.500" y="0.500" font-family="Liberation Serif" font-weight="bold" font-size="13.500" fill="#c400c4">?</text></g><g transform="translate(71,747.500)"><path d="M-7,8L4.500,-3.500" stroke="#000" stroke-width="1.300"/><path d="M8,-8l-1.500,7.500l-6,-6z" fill="#f0f4ff" stroke="#1a5af0" stroke-width="1"/></g><g transform="translate(99.500,747.500)"><path d="M-6,-10.500v9.0M-10.500,-6h9.0M-9.15,-9.15l6.300,6.300M-2.85,-9.15l-6.300,6.300" stroke="#2a7af0" stroke-width="0.900" fill="none"/><path d="M-0.500,-10.500v9.0M-5.0,-6h9.0M-3.65,-9.15l6.300,6.300M2.65,-9.15l-6.300,6.300" stroke="#2a7af0" stroke-width="0.900" fill="none"/><path d="M5,-10.500v9.0M0.500,-6h9.0M1.85,-9.15l6.300,6.300M8.15,-9.15l-6.300,6.300" stroke="#2a7af0" stroke-width="0.900" fill="none"/><path d="M-5.500,1.500v9.0M-10.0,6h9.0M-8.65,2.85l6.300,6.300M-2.35,2.85l-6.300,6.300" stroke="#2a7af0" stroke-width="0.900" fill="none"/><path d="M3.0,9.500h2v-4" fill="none" stroke="#5a4a20" stroke-width="1.100"/><path d="M3.0,5.500l2,-3.500l2,3.500z" fill="#000"/></g><g transform="translate(128,747.500)"><rect x="-9" y="-9" width="18" height="18" fill="#fff" stroke="#000" stroke-width="1.100"/><path d="M0,-9v18M-9,0h18" stroke="#000" stroke-width="1"/><rect x="-7.500" y="-7.500" width="6" height="3" fill="#c8c8c8"/><rect x="1.500" y="-7.500" width="6" height="3" fill="#c8c8c8"/><rect x="-8.500" y="-3" width="8" height="2.500" fill="#7ac0f4"/><rect x="0.500" y="-3" width="8" height="2.500" fill="#7ac0f4"/><rect x="-7.500" y="1.500" width="6" height="3" fill="#b0b0b0"/><rect x="1.500" y="1.500" width="6" height="3" fill="#b0b0b0"/><rect x="-8.500" y="6" width="8" height="2.500" fill="#7ac0f4"/><rect x="0.500" y="6" width="8" height="2.500" fill="#7ac0f4"/></g><g transform="translate(71,778)"><path d="M-6,-3.500h12" stroke="#2f6df0" stroke-dasharray="1.500 1.500" stroke-width="1"/><circle cx="-6.500" cy="-3.500" r="1.500" fill="#f2f2ff" stroke="#2f6df0" stroke-width="1"/><circle cx="6.500" cy="-3.500" r="1.500" fill="#f2f2ff" stroke="#2f6df0" stroke-width="1"/><rect x="-11" y="9" width="22" height="3.200" fill="#f2ee60" stroke="#b0a830" stroke-width="0.500"/><path d="M-8,9v1.500M-5,9v1.500M-2,9v1.500M1,9v1.500M4,9v1.500M7,9v1.500" stroke="#666" stroke-width="0.600"/></g><g transform="translate(99.500,778)"><path d="M-6,-10q13,0 12,14" fill="none" stroke="#3a3020" stroke-width="1.300"/><path d="M-4,1.500l8,-7" stroke="#2f6df0" stroke-width="1.300"/><circle cx="-4" cy="1.500" r="1" fill="#2f6df0"/><rect x="-11" y="9" width="22" height="3.200" fill="#f2ee60" stroke="#b0a830" stroke-width="0.500"/><path d="M-8,9v1.500M-5,9v1.500M-2,9v1.500M1,9v1.500M4,9v1.500M7,9v1.500" stroke="#666" stroke-width="0.600"/></g><g transform="translate(128,778)"><path d="M5,-10l-13,13.500h17" fill="none" stroke="#3a3020" stroke-width="1.200"/><path d="M1,-2.500q3,2 3,6" fill="none" stroke="#2f6df0" stroke-width="1"/><rect x="-11" y="9" width="22" height="3.200" fill="#f2ee60" stroke="#b0a830" stroke-width="0.500"/><path d="M-8,9v1.500M-5,9v1.500M-2,9v1.500M1,9v1.500M4,9v1.500M7,9v1.500" stroke="#666" stroke-width="0.600"/></g><g transform="translate(156.500,778)"><path d="M-10,-7.500h20" stroke="#3a3020" stroke-width="1"/><path d="M-10,-7.500l2,-1v2zM10,-7.500l-2,-1v2z" fill="#3a3020"/><path d="M-9.500,-4.500v8M9.500,-4.500v8" stroke="#2f6df0" stroke-width="1.300"/><path d="M-9,-0.500h18" stroke="#2f6df0" stroke-width="1.100"/><path d="M-9,-0.500l3,-2v4zM9,-0.500l-3,-2v4z" fill="#2f6df0"/><rect x="-11" y="9" width="22" height="3.200" fill="#f2ee60" stroke="#b0a830" stroke-width="0.500"/><path d="M-8,9v1.500M-5,9v1.500M-2,9v1.500M1,9v1.500M4,9v1.500M7,9v1.500" stroke="#666" stroke-width="0.600"/></g><g transform="translate(185,778)"><rect x="-10" y="-7.500" width="20" height="10.500" rx="5.200" fill="#eeeefd" stroke="#2f6df0" stroke-width="1.200"/><rect x="-11" y="9" width="22" height="3.200" fill="#f2ee60" stroke="#b0a830" stroke-width="0.500"/><path d="M-8,9v1.500M-5,9v1.500M-2,9v1.500M1,9v1.500M4,9v1.500M7,9v1.500" stroke="#666" stroke-width="0.600"/></g><g transform="translate(71,806)"><path d="M-10.500,-5l9,-4l12,3v6l-11,5l-10,-4z" fill="#f0eef4" stroke="#2f6df0" stroke-width="1.100"/><path d="M-10.500,-5l10,3.500l11,-4.500M-0.500,-1.500v6.500" fill="none" stroke="#888" stroke-width="0.700"/><rect x="-11" y="10" width="22" height="3.200" fill="#f2ee60" stroke="#b0a830" stroke-width="0.500"/><path d="M-8,10v1.500M-5,10v1.500M-2,10v1.500M1,10v1.500M4,10v1.500M7,10v1.500" stroke="#666" stroke-width="0.600"/></g><g transform="translate(71,835)"><path d="M-9,-10v15M9,-10v15" stroke="#b00000" stroke-width="1.100"/><path d="M-8,-6H8" stroke="#b00000" stroke-width="1"/><path d="M-8,-6l3.500,-2v4zM8,-6l-3.500,-2v4z" fill="#b00000"/><path d="M-9.500,9h19" stroke="#000" stroke-width="1.200"/><path d="M-1.500,5h2v-4" fill="none" stroke="#5a4a20" stroke-width="1.100"/><path d="M-1.500,1l2,-3.500l2,3.500z" fill="#000"/></g><g transform="translate(99.500,835)"><path d="M-9,-9.500v18M9,-9.500v18" stroke="#b00000" stroke-width="1.100"/><path d="M-8,-6H8" stroke="#b00000" stroke-width="1"/><path d="M-8,-6l3.500,-2v4zM8,-6l-3.500,-2v4z" fill="#b00000"/></g><g transform="translate(128,835)"><path d="M-9.500,-8.500v13M-6.500,6l11,-12.500M-5,8.500h15" stroke="#b00000" stroke-width="1.100" fill="none"/><path d="M-8,-7.500l9,3M5,-2.500l3,9" stroke="#b00000" stroke-width="1" fill="none"/><path d="M-8.500,-8l3.500,0l-1.500,2.500zM1.500,-4l-3.500,-2.500l-0.500,3zM8.500,7.500l-3,-2l2.500,-1.500z" fill="#b00000"/></g><g transform="translate(156.500,835)"><path d="M-9,-6h12M-9,0h9M-9,6h6M-9,9h9" stroke="#b00000" stroke-width="1.100"/><text x="7" y="-5" font-size="6.500" fill="#333">3</text><text x="3.500" y="2" font-size="6.500" fill="#333">2</text><text x="-2" y="8" font-size="6.500" fill="#111">1</text><text x="3" y="11" font-size="6.500" fill="#333">0</text></g><g transform="translate(185,835)"><path d="M-10,1v8M-1,-3v12" stroke="#888" stroke-width="1"/><path d="M-10,4h9" stroke="#888" stroke-width="0.900"/><path d="M-4,-3l5,-6v9M4,-3.500l7,-5.500M10,-9l-2,9M-2,-7.500h12" stroke="#b00000" stroke-width="1" fill="none"/><path d="M2.500,7h2v-4" fill="none" stroke="#5a4a20" stroke-width="1.100"/><path d="M2.500,3l2,-3.500l2,3.500z" fill="#000"/></g><g transform="translate(71,863.7)"><path d="M0,-10v9M9,-10v9M-9,-0.500v9M0,-0.500v9" stroke="#b00000" stroke-width="1.100"/><path d="M0,-6.500h9M-9,3h9" stroke="#b00000" stroke-width="0.900"/><path d="M-8.500,-5.500q1,-2 4,-2" stroke="#5a4a20" fill="none" stroke-width="1"/><path d="M-5,-9.500l3,2l-3,2z" fill="#000"/></g><g transform="translate(99.500,863.7)"><path d="M-9,-9.500v17M9,-9.500v17" stroke="#b00000" stroke-width="1.100"/><path d="M-8,-6H8" stroke="#b00000" stroke-width="1"/><path d="M-8,-6l3.500,-2v4zM8,-6l-3.500,-2v4z" fill="#b00000"/><path d="M-9,8.500h18" stroke="#000" stroke-width="1.200"/><path d="M-9,6.500l2,2l-2,2l-2,-2z" fill="#eef" stroke="#2f6df0" stroke-width="0.900"/><path d="M9,6.500l2,2l-2,2l-2,-2z" fill="#eef" stroke="#2f6df0" stroke-width="0.900"/></g><path d="M223.0,232.500l4.500,-5l4.500,5" fill="none" stroke="#444" stroke-width="1.500"/><path d="M223.0,940.500l4.500,5l4.500,-5" fill="none" stroke="#444" stroke-width="1.500"/></svg>
<div style="left:246px;top:92px;width:1674px;height:1px;background:#2b2b2b"></div>
<div style="left:246px;top:93px;width:1674px;height:37px;background:linear-gradient(#9cb6d4 0%,#a9c2de 40%,#bdd3ea 100%)"></div>
<div style="left:246px;top:130px;width:1674px;height:24px;background:#f0f0f0"></div>
<div style="left:246px;top:154px;width:1674px;height:808px;background:#000"></div>
<div style="left:1789px;top:103px;width:42px;height:24px;border:1px solid #6f8fb4;border-radius:3px;box-shadow:inset 0 0 0 1px rgba(255,255,255,.55);background:linear-gradient(#c4d8ee 0%,#b8cfe8 45%,#9dbbda 50%,#a9c4e0 100%)"></div>
<div style="left:1833px;top:103px;width:42px;height:24px;border:1px solid #6f8fb4;border-radius:3px;box-shadow:inset 0 0 0 1px rgba(255,255,255,.55);background:linear-gradient(#c4d8ee 0%,#b8cfe8 45%,#9dbbda 50%,#a9c4e0 100%)"></div>
<div style="left:1877px;top:103px;width:42px;height:24px;border:1px solid #5a1a14;border-radius:3px;box-shadow:inset 0 0 0 1px rgba(255,255,255,.35);background:linear-gradient(#eab0a4 0%,#d98b7c 45%,#c2432a 50%,#c9553a 100%)"></div>
<svg class="L" width="1920" height="1030" viewBox="0 0 1920 1030"><g><path d="M248,105h14l5,5v14h-19z" fill="#d4e4f4" opacity=".8"/><path d="M251.500,111l6,-1.500l6,1.500v9l-6,2l-6,-2z" fill="#1a8af8"/><path d="M251.500,111l6,1.500l6,-1.500l-6,-1.500z" fill="#9ad4ff"/><path d="M257.500,112.500v9.500l6,-2v-9z" fill="#0a4ad8"/></g><g fill="#000"><text x="275.60" y="121.40" font-size="15.95">视图</text></g><g fill="#000"><text x="312.50" y="121.40" font-size="15.5">1</text></g><g fill="#000"><text x="324.50" y="121.40" font-size="15.5">-</text></g><g fill="#000"><text x="334.40" y="121.40" font-size="15.65">顶视图</text></g><g fill="#000"><text x="382.00" y="121.40" font-size="15.5">,</text></g><g fill="#000"><text x="390.00" y="121.40" font-size="15.5" textLength="48.00" lengthAdjust="spacingAndGlyphs">Default</text></g><rect x="1801.500" y="113" width="16" height="4.500" rx="1" fill="#f4f4f4" stroke="#5a6a7a" stroke-width="1"/><g fill="#f4f4f4" stroke="#5a6a7a" stroke-width="1"><path d="M1850.500,105.500h13v12h-13z"/><path d="M1853.500,108.500h7v6h-7z" fill="#b4cae4"/><path d="M1844.500,111.500h13v12h-13z"/><path d="M1848,115h6v5h-6z" fill="#a8c0dc"/></g><path d="M1891,109l14.500,13M1905.500,109l-14.500,13" stroke="#4a4a5a" stroke-width="6" stroke-linecap="butt"/><path d="M1891,109l14.500,13M1905.500,109l-14.500,13" stroke="#f8f8f8" stroke-width="3.800"/><g><rect x="250.500" y="136.500" width="11" height="8" fill="#fff" stroke="#888"/><rect x="250.500" y="136" width="11" height="2" fill="#5a7ac0"/><rect x="256.500" y="140.500" width="9" height="9" fill="#f7f2c0" stroke="#2a6ae8"/><path d="M259.500,143.500h5M259.500,146.500h5" stroke="#555"/><rect x="257.500" y="143" width="1.500" height="1.500" fill="#e00"/><rect x="257.500" y="146" width="1.500" height="1.500" fill="#0a0"/></g><path d="M274.0,138.500h9l-4.500,5z" fill="#000"/><g><path d="M292,144l8,-8l6,1v7l-8,6l-6,-2z" fill="#4a9af4" stroke="#1a5ad0" stroke-width="0.800"/><path d="M296,141l5,-3l3,1.500v3l-5,3l-3,-1z" fill="#d8ecff" stroke="#fff" stroke-width="0.600"/><circle cx="296" cy="145.500" r="2" fill="#e8f4ff"/></g><path d="M303.0,148.0h5l-2.500,3z" fill="#000"/><g stroke="#444" stroke-width="1.100"><path d="M321.500,133.500v4M321.500,146v4M313.500,141.500h4M325.500,141.500h4M316,136l2.500,2.500M327,136l-2.500,2.500M316,147l2.500,-2.500M327,147l-2.500,-2.500"/></g><circle cx="321.500" cy="141.500" r="4" fill="#9ad8f0" stroke="#5a9ab8" stroke-width="0.600"/><circle cx="320.500" cy="140.300" r="1.600" fill="#e8f8ff"/><path d="M337.0,138.500h9l-4.500,5z" fill="#000"/><path d="M353.500,131.500v21" stroke="#a6a6a6"/><path d="M354.500,131.500v21" stroke="#fff"/><path d="M513.500,131.500v21" stroke="#a6a6a6"/><path d="M514.500,131.500v21" stroke="#fff"/><path d="M586.500,131.500v21" stroke="#a6a6a6"/><path d="M587.500,131.500v21" stroke="#fff"/><g><path d="M366,133.500q-1.500,5 -0.500,8.500h3q1,-3.500 -0.500,-8.500z" fill="#c03a3a" stroke="#701818" stroke-width="0.500"/><path d="M363,142h8l1.500,2.500h-11z" fill="#e08888"/><path d="M361.500,144.500h11l1,5h-13z" fill="#c8dcf4" stroke="#88a8d0" stroke-width="0.500"/><path d="M360.500,150h13" stroke="#2a7af0" stroke-width="1"/></g><circle cx="388.0" cy="138.6" r="4.300" fill="#e4f0fa" stroke="#6a8aaa" stroke-width="1"/><path d="M391.0,142.1l4,6" stroke="#e89a30" stroke-width="2.200"/><path d="M386.0,138.6h4M388.0,136.6v4" stroke="#222" stroke-width="1"/><circle cx="410.0" cy="138.6" r="4.300" fill="#e4f0fa" stroke="#6a8aaa" stroke-width="1"/><path d="M413.0,142.1l4,6" stroke="#e89a30" stroke-width="2.200"/><path d="M408.0,138.6h4" stroke="#222" stroke-width="1"/><rect x="427.500" y="135.500" width="12" height="12" fill="none" stroke="#333" stroke-dasharray="2 1.500"/><circle cx="431.0" cy="138.6" r="4.300" fill="#e4f0fa" stroke="#6a8aaa" stroke-width="1"/><path d="M434.0,142.1l4,6" stroke="#e89a30" stroke-width="2.200"/><g><rect x="448.500" y="135.500" width="14" height="12.500" fill="#f4f4f8" stroke="#222" stroke-width="1.200"/><rect x="448.500" y="135" width="14" height="2" fill="#2a3a7a"/><path d="M455.500,139v8M451,143h9" stroke="#222" stroke-width="1"/><path d="M455.500,138l1.500,2h-3zM455.500,148l1.500,-2h-3zM450,143l2,-1.500v3zM461,143l-2,-1.500v3z" fill="#222"/></g><g><path d="M474,139a6,6 0 1 0 8,-2" fill="none" stroke="#2a7af0" stroke-width="2"/><ellipse cx="477" cy="143" rx="3" ry="4" fill="#7ab8f8"/><path d="M481,146v-5" stroke="#000" stroke-width="1.100"/><path d="M479,141.500l2,-3l2,3z" fill="#000"/></g><path d="M482.0,148.0h5l-2.500,3z" fill="#000"/><g><path d="M495.500,142v-5q0,-1.500 1.200,-1.500t1.200,1.500v-2q0,-1.500 1.200,-1.500t1.200,1.500v0.500q0,-1.500 1.200,-1.500t1.200,1.500v1q0,-1 1,-1t1.200,1.500v6q0,6 -4.500,6.500h-2q-2.500,0 -5.500,-6q-0.500,-2 1,-2t2,2.500z" fill="#fff" stroke="#1a3a9a" stroke-width="0.900"/></g><g fill="#e8f0fc" stroke="#1a3a9a" stroke-width="1.100"><ellipse cx="523" cy="139.500" rx="2.300" ry="4"/><ellipse cx="530.500" cy="139.500" rx="2.300" ry="4"/><ellipse cx="523.500" cy="147" rx="1.800" ry="2"/><ellipse cx="530" cy="147" rx="1.800" ry="2"/></g><g><rect x="542.500" y="136" width="14" height="11" fill="#f8f8f8" stroke="#555"/><rect x="542.500" y="135.500" width="14" height="1.500" fill="#444"/><path d="M546.0,144.6q1,-4.500 6,-3" fill="none" stroke="#333" stroke-width="1"/><path d="M544.500,142.1l1.500,3.500l2,-2.500z" fill="#333"/></g><g><rect x="565" y="136" width="14" height="11" fill="#f8f8f8" stroke="#555"/><rect x="565" y="135.500" width="14" height="1.500" fill="#444"/><path d="M575.500,144.6q-1,-4.500 -6,-3" fill="none" stroke="#333" stroke-width="1"/><path d="M577,142.1l-1.500,3.500l-2,-2.500z" fill="#333"/></g><g><rect x="594.500" y="141.500" width="7" height="6" fill="#fff" stroke="#444"/><rect x="600.500" y="135.500" width="6" height="5" fill="#fff" stroke="#444"/><path d="M603,148h3v-3.500" fill="none" stroke="#8a6a20" stroke-width="1.100"/><path d="M604,145l2,-3l2,3z" fill="#8a6a20"/></g><g><path d="M615.500,137.500l12,-1l-5,11z" fill="#fafafa" stroke="#333" stroke-width="1"/><path d="M615.500,137.500l8,4l4,-5M623.500,141.500l-1,6" fill="none" stroke="#555" stroke-width="0.700"/></g><path d="M626.0,148.0h5l-2.500,3z" fill="#000"/><g><path d="M637.500,138l6.500,-3l6.500,3v7.500l-6.500,3.500l-6.500,-3.500z" fill="#f8fbff" stroke="#2a8af8" stroke-width="1.300"/><path d="M637.500,138l6.500,3l6.500,-3M644,141v8" fill="none" stroke="#b8c8d8" stroke-width="0.800"/></g><g><path d="M660.500,137l5,-2l5,2v5.500l-5,2.500l-5,-2.500z" fill="#eaf4ff" stroke="#2a8af8" stroke-width="1.200"/><path d="M662,141l9,9M671,142l-8,8" stroke="#1a1a5a" stroke-width="1.300"/></g><path d="M670.0,148.0h5l-2.500,3z" fill="#000"/><g><rect x="681.500" y="135.500" width="10" height="8" rx="1" fill="#fff" stroke="#2a7af0" stroke-width="1.200"/><path d="M686,142l4,-1.500l4,1.500v5l-4,1.500l-4,-1.500z" fill="#888" stroke="#333" stroke-width="0.700"/><path d="M690,143.500v5" stroke="#ccc" stroke-width="0.600"/></g></svg>
<svg class="L" width="1920" height="1030" viewBox="0 0 1920 1030"><g fill="none" stroke="#ffffff" stroke-width="1"><rect x="455.500" y="209.500" width="1027" height="726"/><path d="M457.500,218q0,-5.500 5.500,-5.500h31q5.500,0 5.500,5.500V877q0,5.500 -5.500,5.500h-31q-5.500,0 -5.500,-5.500z"/><path d="M501.400,218q0,-5.500 5.500,-5.500H1475.500q4,0 4,4V878.500q0,4 -4,4H506.900q-5.500,0 -5.500,-5.500z"/><path d="M626.25,212.600v7.400"/><path d="M748.58,212.600v7.400"/><path d="M870.91,212.600v7.400"/><path d="M993.24,212.600v7.400"/><path d="M1115.57,212.600v7.400"/><path d="M1237.900,212.600v7.400"/><path d="M1360.23,212.600v7.400"/><path d="M457.500,890.6q0,-6 6,-6H804.3q6,0 6,6V927.1q0,6 -6,6H463.500q-6,0 -6,-6z"/><path d="M813.2,890.6q0,-6 6,-6H999.7q6,0 6,6V927.1q0,6 -6,6H819.2q-6,0 -6,-6z"/><path d="M1007.7,890.6q0,-6 6,-6H1181.6q6,0 6,6V927.1q0,6 -6,6H1013.7q-6,0 -6,-6z"/><path d="M1190,889.1q0,-4.500 4.500,-4.500H1474.9q4.500,0 4.500,4.500V928.6q0,4.500 -4.500,4.500H1194.500q-4.500,0 -4.500,-4.500z"/><path d="M470.500,884.600V933.100"/><path d="M600.6,884.600V933.100"/><path d="M637.6,884.600V933.100"/><path d="M686.9,884.600V933.100"/><path d="M715.500,884.600V933.100"/><path d="M759.8,884.600V933.100"/><path d="M457.500,894.900H810.300M457.500,913.600H810.300M457.500,904.250H686.9M457.500,923.600H686.9"/><path d="M1360.300,884.600V908.300M1190,908.300H1479.400M1360.300,896.700H1479.400M1274.800,908.300V933.100M1421.300,908.300V933.100M1421.300,921.500H1479.400"/></g><path d="M567.500,218.500L568.500,217.500L568.500,224.500M567.500,224.500L569.500,224.500" fill="none" stroke="#a4a4a4" stroke-width="1" stroke-linejoin="round" stroke-linecap="square"/><path d="M688.500,218.500L689.500,217.500L691.500,217.500L692.500,218.500L692.500,219.500L688.500,224.500L692.500,224.500" fill="none" stroke="#a4a4a4" stroke-width="1" stroke-linejoin="round" stroke-linecap="square"/><path d="M811.500,218.500L811.500,217.500L813.500,217.500L814.500,218.500L814.500,219.500L813.500,220.500L812.500,220.500M813.500,220.500L814.500,222.500L814.500,223.500L813.500,224.500L811.500,224.500L811.500,223.500" fill="none" stroke="#a4a4a4" stroke-width="1" stroke-linejoin="round" stroke-linecap="square"/><path d="M935.500,224.500L935.500,217.500L933.500,222.500L936.500,222.500" fill="none" stroke="#a4a4a4" stroke-width="1" stroke-linejoin="round" stroke-linecap="square"/><path d="M1058.500,217.500L1055.500,217.500L1055.500,220.500L1058.500,220.500L1058.500,221.500L1058.500,223.500L1058.500,224.500L1056.500,224.500L1055.500,223.500" fill="none" stroke="#a4a4a4" stroke-width="1" stroke-linejoin="round" stroke-linecap="square"/><path d="M1181.500,218.500L1180.500,217.500L1178.500,217.500L1177.500,218.500L1177.500,223.500L1178.500,224.500L1180.500,224.500L1181.500,223.500L1181.500,221.500L1180.500,220.500L1177.500,220.500" fill="none" stroke="#a4a4a4" stroke-width="1" stroke-linejoin="round" stroke-linecap="square"/><path d="M1300.500,217.500L1303.500,217.500L1301.500,224.500" fill="none" stroke="#a4a4a4" stroke-width="1" stroke-linejoin="round" stroke-linecap="square"/><path d="M1423.500,217.500L1424.500,217.500L1425.500,218.500L1425.500,219.500L1424.500,220.500L1423.500,220.500L1422.500,219.500L1422.500,218.500L1423.500,217.500M1423.500,220.500L1422.500,222.500L1422.500,223.500L1423.500,224.500L1424.500,224.500L1425.500,223.500L1425.500,222.500L1424.500,220.500" fill="none" stroke="#a4a4a4" stroke-width="1" stroke-linejoin="round" stroke-linecap="square"/><text x="477.3" y="892.3" font-size="7.400" fill="#e8e8e8" text-anchor="start" textLength="62" lengthAdjust="spacingAndGlyphs">Revision Description</text><text x="618.7" y="892.3" font-size="7.200" fill="#e8e8e8" text-anchor="middle">Date</text><text x="661.6" y="892.3" font-size="7.200" fill="#e8e8e8" text-anchor="middle">Name</text><text x="737.4" y="892.3" font-size="7.200" fill="#e8e8e8" text-anchor="middle">Date</text><text x="785" y="892.3" font-size="7.200" fill="#e8e8e8" text-anchor="middle">Name</text><text x="700.500" y="907" font-size="6.600" fill="#e8e8e8" text-anchor="middle">Drawn</text><text x="700.7" y="926" font-size="6.600" fill="#e8e8e8" text-anchor="middle">Checked</text><text x="903" y="893.6" font-size="8.600" fill="#e8e8e8" text-anchor="middle">Company Name</text><text x="903" y="905.3" font-size="6.400" fill="#e8e8e8" text-anchor="middle">Address 1</text><text x="903" y="917.6" font-size="6.400" fill="#e8e8e8" text-anchor="middle">Address 2</text><text x="861" y="929.8" font-size="6.800" fill="#e8e8e8" text-anchor="start" textLength="84" lengthAdjust="spacingAndGlyphs">City, State, Zip / Post Code.</text><text x="1198.7" y="892.3" font-size="8.400" fill="#e8e8e8" text-anchor="start" textLength="51.700" lengthAdjust="spacingAndGlyphs">Project Name</text><text x="1198.7" y="903.3" font-size="8.400" fill="#e8e8e8" text-anchor="start" textLength="51.200" lengthAdjust="spacingAndGlyphs">WORKSHOP</text><g fill="#e8e8e8"><text x="1250.00" y="903.10" font-size="8.55">示例工程</text></g><g fill="#e8e8e8"><text x="1250.30" y="903.10" font-size="8.55">示例工程</text></g><text x="1198.7" y="917" font-size="8.200" fill="#e8e8e8" text-anchor="start" textLength="46.200" lengthAdjust="spacingAndGlyphs">Job Number</text><text x="1284.4" y="917" font-size="8.200" fill="#e8e8e8" text-anchor="start" textLength="62.800" lengthAdjust="spacingAndGlyphs">Drawing number</text><text x="1368" y="892.2" font-size="9" fill="#e8e8e8" text-anchor="start">=</text><text x="1368" y="905" font-size="9" fill="#e8e8e8" text-anchor="start">+</text><text x="1427.500" y="918" font-size="8.200" fill="#e8e8e8" text-anchor="start" textLength="19.600" lengthAdjust="spacingAndGlyphs">Page</text><text x="1455.8" y="918" font-size="8.200" fill="#e8e8e8" text-anchor="start">1</text><text x="1427.500" y="930.2" font-size="8.200" fill="#e8e8e8" text-anchor="start">of</text><text x="1455.8" y="930.2" font-size="8.200" fill="#e8e8e8" text-anchor="start">4</text><text x="463.9" y="226.1" font-size="4.500" fill="#a8a8a8" text-anchor="start" textLength="32.100" lengthAdjust="spacingAndGlyphs">DATE STAMP</text><text x="466.9" y="246.2" font-size="5.600" fill="#a8a8a8" text-anchor="start" textLength="26.200" lengthAdjust="spacingAndGlyphs">04-17-20 7</text><text x="455.8" y="258.1" font-size="5.600" fill="#a8a8a8" text-anchor="start" textLength="48.200" lengthAdjust="spacingAndGlyphs">20 7-04-17T 4:06:2</text><text transform="translate(494.4,661.500) rotate(-90)" font-size="7.400" fill="#b8b8b8" textLength="205" lengthAdjust="spacingAndGlyphs">Unauthorised duplication prohibited without written consent</text><g fill="none" stroke="#00ff00" stroke-width="1"><rect x="577.500" y="225.500" width="734.100" height="25"/><path d="M626.500,225.500v25"/><path d="M675.500,225.500v25"/><path d="M724.500,225.500v25"/><path d="M773.500,225.500v25"/><path d="M822.500,225.500v25"/><path d="M871.500,225.500v25"/><path d="M920.500,225.500v25"/><path d="M969.500,225.500v25"/><path d="M1017.500,225.500v25"/><path d="M1066.500,225.500v25"/><path d="M1115.500,225.500v25"/><path d="M1164.500,225.500v25"/><path d="M1213.500,225.500v25"/><path d="M1262.500,225.500v25"/></g><g fill="#ffffff"><text x="587.00" y="243.80" font-size="10.5" textLength="25.00" lengthAdjust="spacingAndGlyphs">直流断路器</text></g><g fill="#ffffff"><text x="587.35" y="243.80" font-size="10.5" textLength="25.00" lengthAdjust="spacingAndGlyphs">直流断路器</text></g><g fill="#ffffff"><text x="640.50" y="243.80" font-size="10.5" textLength="12.17" lengthAdjust="spacingAndGlyphs">DCS</text><text x="652.67" y="243.80" font-size="10.5" textLength="11.52" lengthAdjust="spacingAndGlyphs">合闸</text></g><g fill="#ffffff"><text x="640.85" y="243.80" font-size="10.5" textLength="12.17" lengthAdjust="spacingAndGlyphs">DCS</text><text x="653.02" y="243.80" font-size="10.5" textLength="11.52" lengthAdjust="spacingAndGlyphs">合闸</text></g><g fill="#ffffff"><text x="683.00" y="243.80" font-size="10.5" textLength="25.00" lengthAdjust="spacingAndGlyphs">开关柜合闸</text></g><g fill="#ffffff"><text x="683.35" y="243.80" font-size="10.5" textLength="25.00" lengthAdjust="spacingAndGlyphs">开关柜合闸</text></g><g fill="#ffffff"><text x="734.60" y="243.80" font-size="10.5" textLength="11.50" lengthAdjust="spacingAndGlyphs">DCS</text><text x="746.10" y="243.80" font-size="10.5" textLength="10.90" lengthAdjust="spacingAndGlyphs">跳闸</text></g><g fill="#ffffff"><text x="734.95" y="243.80" font-size="10.5" textLength="11.50" lengthAdjust="spacingAndGlyphs">DCS</text><text x="746.45" y="243.80" font-size="10.5" textLength="10.90" lengthAdjust="spacingAndGlyphs">跳闸</text></g><g fill="#ffffff"><text x="780.70" y="243.80" font-size="10.5" textLength="24.30" lengthAdjust="spacingAndGlyphs">开关柜跳闸</text></g><g fill="#ffffff"><text x="781.05" y="243.80" font-size="10.5" textLength="24.30" lengthAdjust="spacingAndGlyphs">开关柜跳闸</text></g><g fill="#ffffff"><text x="827.50" y="243.80" font-size="10.5" textLength="30.00" lengthAdjust="spacingAndGlyphs">低电压保护跳闸</text></g><g fill="#ffffff"><text x="827.85" y="243.80" font-size="10.5" textLength="30.00" lengthAdjust="spacingAndGlyphs">低电压保护跳闸</text></g><g fill="#ffffff"><text x="884.25" y="243.80" font-size="10.5" textLength="19.50" lengthAdjust="spacingAndGlyphs">保护跳闸</text></g><g fill="#ffffff"><text x="884.60" y="243.80" font-size="10.5" textLength="19.50" lengthAdjust="spacingAndGlyphs">保护跳闸</text></g><g fill="#ffffff"><text x="923.00" y="243.80" font-size="10.5" textLength="30.00" lengthAdjust="spacingAndGlyphs">合闸位置指示</text></g><g fill="#ffffff"><text x="923.35" y="243.80" font-size="10.5" textLength="30.00" lengthAdjust="spacingAndGlyphs">合闸位置指示</text></g><g fill="#ffffff"><text x="972.50" y="243.80" font-size="10.5" textLength="30.50" lengthAdjust="spacingAndGlyphs">跳闸位置指示</text></g><g fill="#ffffff"><text x="972.85" y="243.80" font-size="10.5" textLength="30.50" lengthAdjust="spacingAndGlyphs">跳闸位置指示</text></g><g fill="#ffffff"><text x="1028.75" y="243.80" font-size="10.5" textLength="20.75" lengthAdjust="spacingAndGlyphs">控制电源</text></g><g fill="#ffffff"><text x="1029.10" y="243.80" font-size="10.5" textLength="20.75" lengthAdjust="spacingAndGlyphs">控制电源</text></g><g fill="#ffffff"><text x="1080.50" y="243.80" font-size="10.5" textLength="20.25" lengthAdjust="spacingAndGlyphs">储能电源</text></g><g fill="#ffffff"><text x="1080.85" y="243.80" font-size="10.5" textLength="20.25" lengthAdjust="spacingAndGlyphs">储能电源</text></g><g fill="#ffffff"><text x="1123.75" y="243.80" font-size="10.5" textLength="25.75" lengthAdjust="spacingAndGlyphs">弹簧未储能</text></g><g fill="#ffffff"><text x="1124.10" y="243.80" font-size="10.5" textLength="25.75" lengthAdjust="spacingAndGlyphs">弹簧未储能</text></g><g fill="#ffffff"><text x="1169.50" y="243.80" font-size="10.5" textLength="29.25" lengthAdjust="spacingAndGlyphs">接地开关闭锁</text></g><g fill="#ffffff"><text x="1169.85" y="243.80" font-size="10.5" textLength="29.25" lengthAdjust="spacingAndGlyphs">接地开关闭锁</text></g><g fill="#ffffff"><text x="1222.50" y="243.80" font-size="10.5" textLength="21.25" lengthAdjust="spacingAndGlyphs">事故信号</text></g><g fill="#ffffff"><text x="1222.85" y="243.80" font-size="10.5" textLength="21.25" lengthAdjust="spacingAndGlyphs">事故信号</text></g><g fill="#ffffff"><text x="1267.50" y="243.80" font-size="10.5" textLength="30.00" lengthAdjust="spacingAndGlyphs">弹簧储能指示</text></g><g fill="#ffffff"><text x="1267.85" y="243.80" font-size="10.5" textLength="30.00" lengthAdjust="spacingAndGlyphs">弹簧储能指示</text></g><rect x="627.500" y="599.500" width="490.0" height="51.0" fill="none" stroke="#00ff00"/><rect x="640.500" y="687.500" width="660.0" height="37.0" fill="none" stroke="#00ff00"/><g fill="#ffffff"><text x="822.20" y="626.40" font-size="10.5" textLength="43.40" lengthAdjust="spacingAndGlyphs">综合微机保护测控装置</text></g><g fill="#ffffff"><text x="822.60" y="626.40" font-size="10.5" textLength="43.40" lengthAdjust="spacingAndGlyphs">综合微机保护测控装置</text></g><g fill="#ffffff"><text x="823.00" y="626.40" font-size="10.5" textLength="43.40" lengthAdjust="spacingAndGlyphs">综合微机保护测控装置</text></g><path d="M797.500,702.500L797.500,709.500M800.500,702.500L800.500,709.500M797.500,705.500L800.500,705.500M802.500,702.500L804.500,709.500L805.500,702.500M807.500,702.500L810.500,709.500M810.500,702.500L807.500,709.500" fill="none" stroke="#ffffff" stroke-width="1" stroke-linejoin="round" stroke-linecap="square"/><path d="M815.55,703.67L816.2,702.500L816.2,709.500M815.55,709.500L816.85,709.500M818.6,703.67L819.25,702.500L820.55,702.500L821.2,703.67L821.2,704.83L818.6,709.500L821.2,709.500" fill="none" stroke="#ffffff" stroke-width="1" stroke-linejoin="round" stroke-linecap="square"/><g fill="#ffffff"><text x="822.20" y="709.80" font-size="11" textLength="34.30" lengthAdjust="spacingAndGlyphs">真空断路器操作机构</text></g><g fill="#ffffff"><text x="822.60" y="709.80" font-size="11" textLength="34.30" lengthAdjust="spacingAndGlyphs">真空断路器操作机构</text></g><g fill="#ffffff"><text x="823.00" y="709.80" font-size="11" textLength="34.30" lengthAdjust="spacingAndGlyphs">真空断路器操作机构</text></g><path d="M572.500,312.500L591,312.500" stroke="#ffff00" stroke-width="1" fill="none"/><path d="M604,312.500L1323,312.500" stroke="#ffff00" stroke-width="1" fill="none"/><path d="M572.500,336.500L591,336.500" stroke="#ffff00" stroke-width="1" fill="none"/><path d="M604,336.500L1283,336.500" stroke="#ffff00" stroke-width="1" fill="none"/><path d="M572.500,752.500L592,752.500" stroke="#ffff00" stroke-width="1" fill="none"/><path d="M604.500,752.500L1313.75,752.500" stroke="#ffff00" stroke-width="1" fill="none"/><path d="M572.500,775.500L592,775.500" stroke="#ffff00" stroke-width="1" fill="none"/><path d="M604.500,775.500L1352,775.500" stroke="#ffff00" stroke-width="1" fill="none"/><path d="M572.500,299.2L572.500,348.8" stroke="#00ff00" stroke-width="1" fill="none"/><path d="M572.500,740L572.500,787.500" stroke="#00ff00" stroke-width="1" fill="none"/><path d="M591.2,312.2L603.6,305.9" stroke="#00ff00" stroke-width="1" fill="none"/><path d="M570.500,312.500L574.500,312.500" stroke="#00ff00" stroke-width="1" fill="none"/><path d="M602.300,311l3,3M605.300,311l-3,3" stroke="#00ff00" stroke-width="0.800"/><path d="M598.500,307.3l2.500,1" stroke="#00ff00" stroke-width="1.600"/><path d="M591.2,336.2L603.6,329.9" stroke="#00ff00" stroke-width="1" fill="none"/><path d="M570.500,336.500L574.500,336.500" stroke="#00ff00" stroke-width="1" fill="none"/><path d="M602.300,335l3,3M605.300,335l-3,3" stroke="#00ff00" stroke-width="0.800"/><path d="M598.500,331.3l2.500,1" stroke="#00ff00" stroke-width="1.600"/><path d="M591.2,752.2L603.6,745.9" stroke="#00ff00" stroke-width="1" fill="none"/><path d="M570.500,752.500L574.500,752.500" stroke="#00ff00" stroke-width="1" fill="none"/><path d="M602.300,751l3,3M605.300,751l-3,3" stroke="#00ff00" stroke-width="0.800"/><path d="M598.500,747.3l2.500,1" stroke="#00ff00" stroke-width="1.600"/><path d="M591.2,775.2L603.6,768.9" stroke="#00ff00" stroke-width="1" fill="none"/><path d="M570.500,775.500L574.500,775.500" stroke="#00ff00" stroke-width="1" fill="none"/><path d="M602.300,774l3,3M605.300,774l-3,3" stroke="#00ff00" stroke-width="0.800"/><path d="M598.500,770.3l2.500,1" stroke="#00ff00" stroke-width="1.600"/><path d="M584.500,300.2V307.9" stroke="#ff0000" stroke-width="1"/><path d="M581.500,305.9h6l-3,5z" fill="#ff0000"/><path d="M584.500,324V332.7" stroke="#ff0000" stroke-width="1"/><path d="M581.500,330.7h6l-3,5z" fill="#ff0000"/><path d="M584.500,740V748.2" stroke="#ff0000" stroke-width="1"/><path d="M581.500,746.2h6l-3,5z" fill="#ff0000"/><path d="M584.500,763V771.7" stroke="#ff0000" stroke-width="1"/><path d="M581.500,769.7h6l-3,5z" fill="#ff0000"/><path d="M651.500,336.500L651.500,448.500" stroke="#ffff00" stroke-width="1" fill="none"/><path d="M651.500,457.4L651.500,502.500" stroke="#ffff00" stroke-width="1" fill="none"/><path d="M651.500,502.500L651.500,505.500" stroke="#ffffff" stroke-width="1" fill="none"/><path d="M651.500,510L651.500,526.500" stroke="#ffff00" stroke-width="1" fill="none"/><path d="M651.500,539L651.500,548" stroke="#ffff00" stroke-width="1" fill="none"/><path d="M651.500,556.4L651.500,565.8" stroke="#ffff00" stroke-width="1" fill="none"/><path d="M651.500,579.500L651.500,599.500" stroke="#ffff00" stroke-width="1" fill="none"/><path d="M651.500,526.500L651.500,539" stroke="#00ff00" stroke-width="1" fill="none"/><path d="M651.500,565.8L651.500,579.500" stroke="#00ff00" stroke-width="1" fill="none"/><path d="M651.500,599.500L651.500,604" stroke="#ffff00" stroke-width="1" fill="none"/><path d="M651.500,637L651.500,672.500" stroke="#ffff00" stroke-width="1" fill="none"/><path d="M651.500,672.500L651.500,685" stroke="#00ff00" stroke-width="1" fill="none"/><path d="M651.500,685L651.500,687.500" stroke="#ffff00" stroke-width="1" fill="none"/><path d="M651.500,724.500L651.500,728" stroke="#ffff00" stroke-width="1" fill="none"/><path d="M651.500,728L651.500,740" stroke="#00ff00" stroke-width="1" fill="none"/><path d="M651.500,740L651.500,752.500" stroke="#ffff00" stroke-width="1" fill="none"/><path d="M703.500,336.500L703.500,526.500" stroke="#ffff00" stroke-width="1" fill="none"/><path d="M703.500,539L703.500,548" stroke="#ffff00" stroke-width="1" fill="none"/><path d="M703.500,556.4L703.500,565.8" stroke="#ffff00" stroke-width="1" fill="none"/><path d="M703.500,579.500L703.500,588.500L651.500,588.500" stroke="#ffff00" stroke-width="1" fill="none"/><path d="M703.500,526.500L703.500,539" stroke="#00ff00" stroke-width="1" fill="none"/><path d="M703.500,565.8L703.500,579.500" stroke="#00ff00" stroke-width="1" fill="none"/><path d="M703.500,390.500L781.500,390.500L781.500,506.500L750.500,506.500" stroke="#ffff00" stroke-width="1" fill="none"/><path d="M703.500,384L703.500,390" stroke="#ffffff" stroke-width="1" fill="none"/><path d="M651.500,403.500L750.500,403.500L750.500,450" stroke="#ffff00" stroke-width="1" fill="none"/><path d="M750.500,458.8L750.500,603.500" stroke="#ffff00" stroke-width="1" fill="none"/><path d="M651.500,517.500L703.500,517.500" stroke="#ffff00" stroke-width="1" fill="none"/><path d="M646.2,547L651.500,556.500" stroke="#00ff00" stroke-width="1" fill="none"/><path d="M646.3,531.8a5.200,5.400 0 0 1 10.400,0" fill="none" stroke="#00ff00" stroke-width="1.100"/><path d="M646.3,574.1a5.200,5.400 0 0 0 10.400,0" fill="none" stroke="#00ff00" stroke-width="1.100"/><path d="M698.2,547L703.500,556.500" stroke="#00ff00" stroke-width="1" fill="none"/><path d="M698.3,531.8a5.200,5.400 0 0 1 10.400,0" fill="none" stroke="#00ff00" stroke-width="1.100"/><path d="M698.3,574.1a5.200,5.400 0 0 0 10.400,0" fill="none" stroke="#00ff00" stroke-width="1.100"/><path d="M750.500,637L750.500,672.500" stroke="#ffff00" stroke-width="1" fill="none"/><path d="M750.500,672.500L750.500,685" stroke="#00ff00" stroke-width="1" fill="none"/><path d="M750.500,685L750.500,687.500" stroke="#ffff00" stroke-width="1" fill="none"/><path d="M750.500,724.500L750.500,728" stroke="#ffff00" stroke-width="1" fill="none"/><path d="M750.500,728L750.500,740" stroke="#00ff00" stroke-width="1" fill="none"/><path d="M750.500,740L750.500,752.500" stroke="#ffff00" stroke-width="1" fill="none"/><path d="M750.500,657.500L799.500,657.500L799.500,672.500" stroke="#ffff00" stroke-width="1" fill="none"/><path d="M799.500,672.500L799.500,685" stroke="#00ff00" stroke-width="1" fill="none"/><path d="M799.500,685L799.500,687.500" stroke="#ffff00" stroke-width="1" fill="none"/><path d="M799.500,724.500L799.500,728" stroke="#ffff00" stroke-width="1" fill="none"/><path d="M799.500,728L799.500,740" stroke="#00ff00" stroke-width="1" fill="none"/><path d="M799.500,740L799.500,745.2" stroke="#ffff00" stroke-width="1" fill="none"/><path d="M799.500,745.2L799.500,752.500" stroke="#ffffff" stroke-width="1" fill="none"/><path d="M847.500,336.500L847.500,391.500" stroke="#ffff00" stroke-width="1" fill="none"/><path d="M847.500,403.75L847.500,604" stroke="#ffff00" stroke-width="1" fill="none"/><path d="M841.3,392L847.500,403.75" stroke="#00ff00" stroke-width="1" fill="none"/><path d="M847.500,562.500L896.500,562.500L896.500,604" stroke="#ffff00" stroke-width="1" fill="none"/><path d="M945.500,638L945.500,672.500" stroke="#ffff00" stroke-width="1" fill="none"/><path d="M945.500,672.500L945.500,685" stroke="#00ff00" stroke-width="1" fill="none"/><path d="M945.500,685L945.500,687.500" stroke="#ffff00" stroke-width="1" fill="none"/><path d="M945.500,724.500L945.500,728" stroke="#ffff00" stroke-width="1" fill="none"/><path d="M945.500,728L945.500,740" stroke="#00ff00" stroke-width="1" fill="none"/><path d="M945.500,740L945.500,745.2" stroke="#ffff00" stroke-width="1" fill="none"/><path d="M945.500,745.2L945.500,752.500" stroke="#ffffff" stroke-width="1" fill="none"/><path d="M994.500,638L994.500,672.500" stroke="#ffff00" stroke-width="1" fill="none"/><path d="M994.500,672.500L994.500,685" stroke="#00ff00" stroke-width="1" fill="none"/><path d="M994.500,685L994.500,687.500" stroke="#ffff00" stroke-width="1" fill="none"/><path d="M994.500,724.500L994.500,728" stroke="#ffff00" stroke-width="1" fill="none"/><path d="M994.500,728L994.500,740" stroke="#00ff00" stroke-width="1" fill="none"/><path d="M994.500,740L994.500,745.2" stroke="#ffff00" stroke-width="1" fill="none"/><path d="M994.500,745.2L994.500,752.500" stroke="#ffffff" stroke-width="1" fill="none"/><path d="M1043.500,336.500L1043.500,603" stroke="#ffff00" stroke-width="1" fill="none"/><path d="M1092.500,336.500L1092.500,515.3" stroke="#ffff00" stroke-width="1" fill="none"/><path d="M1092.500,515.3L1092.500,526.500" stroke="#ffffff" stroke-width="1" fill="none"/><path d="M1092.500,539.7L1092.500,552" stroke="#ffffff" stroke-width="1" fill="none"/><path d="M1092.500,552L1092.500,603" stroke="#ffff00" stroke-width="1" fill="none"/><path d="M1092.500,638L1092.500,752.500" stroke="#ffff00" stroke-width="1" fill="none"/><path d="M1043.500,637L1043.500,752.500" stroke="#c03cc0" stroke-width="4.200" fill="none"/><path d="M1043.500,637L1043.500,752.500" stroke="#e878b0" stroke-width="1.200" fill="none"/><path d="M1141.500,336.500L1141.500,532.8" stroke="#ffff00" stroke-width="1" fill="none"/><path d="M1141.500,532.8L1141.500,545.1" stroke="#ffffff" stroke-width="1" fill="none"/><path d="M1141.500,558.3L1141.500,570" stroke="#ffffff" stroke-width="1" fill="none"/><path d="M1141.500,570L1141.500,672.500" stroke="#ffff00" stroke-width="1" fill="none"/><path d="M1141.500,672.500L1141.500,685" stroke="#00ff00" stroke-width="1" fill="none"/><path d="M1141.500,685L1141.500,687.500" stroke="#ffff00" stroke-width="1" fill="none"/><path d="M1141.500,724.500L1141.500,728" stroke="#ffff00" stroke-width="1" fill="none"/><path d="M1141.500,728L1141.500,740" stroke="#00ff00" stroke-width="1" fill="none"/><path d="M1141.500,740L1141.500,752.500" stroke="#ffff00" stroke-width="1" fill="none"/><path d="M1199.500,336.500L1199.500,752.500" stroke="#ffffff" stroke-width="1" fill="none"/><path d="M1258.500,336.500L1258.500,752.500" stroke="#ffff00" stroke-width="1" fill="none"/><path d="M1288.500,312.500L1288.500,672.500" stroke="#ffff00" stroke-width="1" fill="none"/><path d="M1288.500,672.500L1288.500,685" stroke="#00ff00" stroke-width="1" fill="none"/><path d="M1288.500,685L1288.500,687.500" stroke="#ffff00" stroke-width="1" fill="none"/><path d="M1288.500,724.500L1288.500,728" stroke="#ffff00" stroke-width="1" fill="none"/><path d="M1288.500,728L1288.500,740" stroke="#00ff00" stroke-width="1" fill="none"/><path d="M1288.500,740L1288.500,746.500L1288.500,746.500L1288.500,775.500" stroke="#ffff00" stroke-width="1" fill="none"/><path d="M646.3,677.7a5.200,5.400 0 0 1 10.400,0" fill="none" stroke="#00ff00" stroke-width="1.100"/><path d="M646.3,734.7a5.200,5.400 0 0 0 10.400,0" fill="none" stroke="#00ff00" stroke-width="1.100"/><path d="M745.3,677.7a5.200,5.400 0 0 1 10.400,0" fill="none" stroke="#00ff00" stroke-width="1.100"/><path d="M745.3,734.7a5.200,5.400 0 0 0 10.400,0" fill="none" stroke="#00ff00" stroke-width="1.100"/><path d="M794.3,677.7a5.200,5.400 0 0 1 10.400,0" fill="none" stroke="#00ff00" stroke-width="1.100"/><path d="M794.3,734.7a5.200,5.400 0 0 0 10.400,0" fill="none" stroke="#00ff00" stroke-width="1.100"/><path d="M940.3,677.7a5.200,5.400 0 0 1 10.400,0" fill="none" stroke="#00ff00" stroke-width="1.100"/><path d="M940.3,734.7a5.200,5.400 0 0 0 10.400,0" fill="none" stroke="#00ff00" stroke-width="1.100"/><path d="M989.3,677.7a5.200,5.400 0 0 1 10.400,0" fill="none" stroke="#00ff00" stroke-width="1.100"/><path d="M989.3,734.7a5.200,5.400 0 0 0 10.400,0" fill="none" stroke="#00ff00" stroke-width="1.100"/><path d="M1136.3,677.7a5.200,5.400 0 0 1 10.400,0" fill="none" stroke="#00ff00" stroke-width="1.100"/><path d="M1136.3,734.7a5.200,5.400 0 0 0 10.400,0" fill="none" stroke="#00ff00" stroke-width="1.100"/><path d="M1283.3,677.7a5.200,5.400 0 0 1 10.400,0" fill="none" stroke="#00ff00" stroke-width="1.100"/><path d="M1283.3,734.7a5.200,5.400 0 0 0 10.400,0" fill="none" stroke="#00ff00" stroke-width="1.100"/><circle cx="651.500" cy="604.2" r="2.100" fill="none" stroke="#ffffff" stroke-width="1.100"/><path d="M648,607.7l7,-7" stroke="#ffffff" stroke-width="1.100"/><circle cx="750.500" cy="604.2" r="2.100" fill="none" stroke="#ffffff" stroke-width="1.100"/><path d="M747,607.7l7,-7" stroke="#ffffff" stroke-width="1.100"/><circle cx="847.500" cy="604.2" r="2.100" fill="none" stroke="#ffffff" stroke-width="1.100"/><path d="M844,607.7l7,-7" stroke="#ffffff" stroke-width="1.100"/><circle cx="896.500" cy="604.2" r="2.100" fill="none" stroke="#ffffff" stroke-width="1.100"/><path d="M893,607.7l7,-7" stroke="#ffffff" stroke-width="1.100"/><circle cx="1043.500" cy="604.2" r="2.100" fill="none" stroke="#ffffff" stroke-width="1.100"/><path d="M1040,607.7l7,-7" stroke="#ffffff" stroke-width="1.100"/><circle cx="1092.500" cy="604.2" r="2.100" fill="none" stroke="#ffffff" stroke-width="1.100"/><path d="M1089,607.7l7,-7" stroke="#ffffff" stroke-width="1.100"/><circle cx="651.500" cy="635.8" r="2.100" fill="none" stroke="#ffffff" stroke-width="1.100"/><path d="M648,639.3l7,-7" stroke="#ffffff" stroke-width="1.100"/><circle cx="750.500" cy="635.8" r="2.100" fill="none" stroke="#ffffff" stroke-width="1.100"/><path d="M747,639.3l7,-7" stroke="#ffffff" stroke-width="1.100"/><circle cx="945.500" cy="635.8" r="2.100" fill="none" stroke="#ffffff" stroke-width="1.100"/><path d="M942,639.3l7,-7" stroke="#ffffff" stroke-width="1.100"/><circle cx="994.500" cy="635.8" r="2.100" fill="none" stroke="#ffffff" stroke-width="1.100"/><path d="M991,639.3l7,-7" stroke="#ffffff" stroke-width="1.100"/><circle cx="1043.500" cy="635.8" r="2.100" fill="none" stroke="#ffffff" stroke-width="1.100"/><path d="M1040,639.3l7,-7" stroke="#ffffff" stroke-width="1.100"/><circle cx="1092.500" cy="635.8" r="2.100" fill="none" stroke="#ffffff" stroke-width="1.100"/><path d="M1089,639.3l7,-7" stroke="#ffffff" stroke-width="1.100"/><rect x="650" y="335" width="4" height="4" fill="#ffffff"/><rect x="702" y="335" width="4" height="4" fill="#ffffff"/><rect x="846" y="335" width="4" height="4" fill="#ffffff"/><rect x="1042" y="335" width="4" height="4" fill="#ffffff"/><rect x="1091" y="335" width="4" height="4" fill="#ffffff"/><rect x="1140" y="335" width="4" height="4" fill="#ffffff"/><rect x="1198" y="335" width="4" height="4" fill="#ffffff"/><rect x="1257" y="335" width="4" height="4" fill="#ffffff"/><rect x="1287" y="311" width="4" height="4" fill="#ffffff"/><rect x="702" y="389" width="4" height="4" fill="#ffffff"/><rect x="650" y="401" width="4" height="4" fill="#ffffff"/><rect x="650" y="515" width="4" height="4" fill="#ffffff"/><rect x="749" y="504" width="4" height="4" fill="#ffffff"/><rect x="650" y="587" width="4" height="4" fill="#ffffff"/><rect x="846" y="561" width="4" height="4" fill="#ffffff"/><rect x="749" y="656" width="4" height="4" fill="#ffffff"/><rect x="650" y="751" width="4" height="4" fill="#ffffff"/><rect x="749" y="751" width="4" height="4" fill="#ffffff"/><rect x="798" y="751" width="4" height="4" fill="#ffffff"/><rect x="944" y="751" width="4" height="4" fill="#ffffff"/><rect x="993" y="751" width="4" height="4" fill="#ffffff"/><rect x="1091" y="751" width="4" height="4" fill="#ffffff"/><rect x="1140" y="751" width="4" height="4" fill="#ffffff"/><rect x="1198" y="751" width="4" height="4" fill="#ffffff"/><rect x="1257" y="751" width="4" height="4" fill="#ffffff"/><rect x="1042" y="751" width="4" height="4" fill="#ffd0e8"/><rect x="1287" y="774" width="4" height="4" fill="#ffffff"/><path d="M641.500,353.500h20" stroke="#ffff00" stroke-width="1" stroke-dasharray="5.600 1.800"/><path d="M641.500,380.500h20" stroke="#ffff00" stroke-width="1" stroke-dasharray="5.600 1.800"/><path d="M694,379.500h19.0" stroke="#ffff00" stroke-width="1" stroke-dasharray="5.600 1.800"/><path d="M649.3,356.2l4.400,4M653.7,356.2l-4.400,4" stroke="#00ff00" stroke-width="1.300"/><path d="M649.3,362l4.400,4M653.7,362l-4.400,4" stroke="#00ff00" stroke-width="1.300"/><path d="M649.3,367.8l4.400,4M653.7,367.8l-4.400,4" stroke="#00ff00" stroke-width="1.300"/><path d="M649.3,373.9l4.400,4M653.7,373.9l-4.400,4" stroke="#00ff00" stroke-width="1.300"/><path d="M701.3,354l4.400,4M705.7,354l-4.400,4" stroke="#00ff00" stroke-width="1.300"/><path d="M701.3,360.500l4.400,4M705.7,360.500l-4.400,4" stroke="#00ff00" stroke-width="1.300"/><path d="M701.3,366.8l4.400,4M705.7,366.8l-4.400,4" stroke="#00ff00" stroke-width="1.300"/><path d="M701.3,372.7l4.400,4M705.7,372.7l-4.400,4" stroke="#00ff00" stroke-width="1.300"/><circle cx="651.8" cy="417.4" r="2" fill="#000" stroke="#ffffff" stroke-width="1.100"/><path d="M656.500,414.500L658.500,414.500L659.500,415.500L659.500,418.500L658.500,419.500L656.500,419.500L656.500,414.500M661.500,414.500L663.500,414.500L664.500,415.500L664.500,418.500L663.500,419.500L661.500,419.500L661.500,414.500" fill="none" stroke="#ffffff" stroke-width="0.900" stroke-linejoin="round" stroke-linecap="square"/><circle cx="750.500" cy="418.500" r="2" fill="#000" stroke="#ffffff" stroke-width="1.100"/><path d="M754.500,415.500L756.500,415.500L757.500,416.500L757.500,419.500L756.500,420.500L754.500,420.500L754.500,415.500M759.500,415.500L761.500,415.500L762.500,416.500L762.500,419.500L761.500,420.500L759.500,420.500L759.500,415.500" fill="none" stroke="#ffffff" stroke-width="0.900" stroke-linejoin="round" stroke-linecap="square"/><circle cx="651.500" cy="507.7" r="2" fill="#000" stroke="#ffffff" stroke-width="1.100"/><path d="M654.500,508.500L657.500,508.500L658.500,509.500L658.500,512.500L657.500,513.500L654.500,513.500L654.500,508.500M659.500,508.500L662.500,508.500L662.500,509.500L662.500,512.500L662.500,513.500L659.500,513.500L659.500,508.500" fill="none" stroke="#ffffff" stroke-width="0.900" stroke-linejoin="round" stroke-linecap="square"/><circle cx="750.500" cy="495" r="2" fill="#000" stroke="#ffffff" stroke-width="1.100"/><path d="M754.500,496.500L756.500,496.500L757.500,497.500L757.500,500.500L756.500,501.500L754.500,501.500L754.500,496.500M759.500,496.500L761.500,496.500L762.500,497.500L762.500,500.500L761.500,501.500L759.500,501.500L759.500,496.500" fill="none" stroke="#ffffff" stroke-width="0.900" stroke-linejoin="round" stroke-linecap="square"/><rect x="645.500" y="507" width="1" height="1" fill="#ffffff"/><rect x="744" y="494.500" width="1" height="1" fill="#ffffff"/><rect x="632.500" y="441.500" width="32" height="23" fill="none" stroke="#ffffff" stroke-width="1"/><rect x="730.500" y="441.500" width="32" height="23" fill="none" stroke="#ffffff" stroke-width="1"/><path d="M629.500,449.500L632.500,449.500M631.500,448.500L631.500,451.500M637.500,448.500L636.500,447.500L635.500,447.500L634.500,448.500L634.500,449.500L635.500,449.500L636.500,449.500L637.500,450.500L637.500,451.500L636.500,452.500L635.500,452.500L634.500,451.500M642.500,448.500L641.500,447.500L639.500,447.500L639.500,448.500L639.500,451.500L639.500,452.500L641.500,452.500L642.500,451.500M643.500,452.500L643.500,447.500L646.500,447.500L646.500,448.500L646.500,449.500L646.500,449.500L643.500,449.500M645.500,449.500L646.500,452.500" fill="none" stroke="#ffffff" stroke-width="0.900" stroke-linejoin="round" stroke-linecap="square"/><path d="M634.500,454.500L634.500,459.500M637.500,454.500L634.500,457.500M635.500,456.500L637.500,459.500M639.500,454.500L641.500,454.500L642.500,455.500L642.500,456.500L641.500,456.500L639.500,456.500L639.500,456.500L639.500,455.500L639.500,454.500M639.500,456.500L639.500,457.500L639.500,458.500L639.500,459.500L641.500,459.500L642.500,458.500L642.500,457.500L641.500,456.500M644.500,455.500L644.500,454.500L646.500,454.500L647.500,455.500L647.500,456.500L646.500,456.500L645.500,456.500M646.500,456.500L647.500,457.500L647.500,458.500L646.500,459.500L644.500,459.500L644.500,458.500" fill="none" stroke="#ffffff" stroke-width="0.900" stroke-linejoin="round" stroke-linecap="square"/><path d="M727.500,450.500L730.500,450.500M729.500,449.500L729.500,452.500M735.500,449.500L734.500,448.500L733.500,448.500L732.500,449.500L732.500,450.500L733.500,450.500L734.500,450.500L735.500,451.500L735.500,452.500L734.500,453.500L733.500,453.500L732.500,452.500M740.500,449.500L739.500,448.500L737.500,448.500L737.500,449.500L737.500,452.500L737.500,453.500L739.500,453.500L740.500,452.500M741.500,453.500L741.500,448.500L744.500,448.500L744.500,449.500L744.500,450.500L744.500,450.500L741.500,450.500M743.500,450.500L744.500,453.500" fill="none" stroke="#ffffff" stroke-width="0.900" stroke-linejoin="round" stroke-linecap="square"/><path d="M732.500,455.500L732.500,460.500M735.500,455.500L732.500,458.500M733.500,457.500L735.500,460.500M737.500,455.500L739.500,455.500L740.500,456.500L740.500,457.500L739.500,457.500L737.500,457.500L737.500,457.500L737.500,456.500L737.500,455.500M737.500,457.500L737.500,458.500L737.500,459.500L737.500,460.500L739.500,460.500L740.500,459.500L740.500,458.500L739.500,457.500M744.500,460.500L744.500,455.500L742.500,458.500L745.500,458.500" fill="none" stroke="#ffffff" stroke-width="0.900" stroke-linejoin="round" stroke-linecap="square"/><path d="M647.2,448.500L651.9,457.4" stroke="#00ff00" stroke-width="1" fill="none"/><path d="M745.6,450L750.500,458.8" stroke="#00ff00" stroke-width="1" fill="none"/><path d="M623.500,468.500L624.500,468.500L624.500,469.500L624.500,471.500L624.500,472.500L623.500,472.500L623.500,468.500M627.500,469.500L627.500,468.500L626.500,468.500L626.500,469.500L626.500,471.500L626.500,472.500L627.500,472.500L627.500,471.500M630.500,469.500L630.500,468.500L629.500,468.500L628.500,469.500L628.500,469.500L629.500,470.500L630.500,470.500L630.500,471.500L630.500,471.500L630.500,472.500L629.500,472.500L628.500,471.500" fill="none" stroke="#ffff00" stroke-width="0.800" stroke-linejoin="round" stroke-linecap="square"/><path d="M622,473.500L632,473.500" stroke="#ffff00" stroke-width="0.800" fill="none"/><path d="M632,473.6L647.2,461.2" stroke="#ffffff" stroke-width="0.800" fill="none"/><path d="M721.500,468.500L722.500,468.500L722.500,469.500L722.500,472.500L722.500,472.500L721.500,472.500L721.500,468.500M725.500,469.500L725.500,468.500L724.500,468.500L724.500,469.500L724.500,472.500L724.500,472.500L725.500,472.500L725.500,472.500M728.500,469.500L728.500,468.500L727.500,468.500L726.500,469.500L726.500,470.500L727.500,470.500L728.500,470.500L728.500,471.500L728.500,472.500L728.500,472.500L727.500,472.500L726.500,472.500" fill="none" stroke="#ffff00" stroke-width="0.800" stroke-linejoin="round" stroke-linecap="square"/><path d="M720,474.500L730,474.500" stroke="#ffff00" stroke-width="0.800" fill="none"/><path d="M730,474.3L745.6,461.6" stroke="#ffffff" stroke-width="0.800" fill="none"/><path d="M757.500,436.500L756.500,435.500L755.500,435.500L755.500,436.500L755.500,436.500L755.500,437.500L756.500,437.500L757.500,438.500L757.500,438.500L756.500,439.500L755.500,439.500L755.500,438.500M758.500,435.500L759.500,435.500L760.500,436.500L760.500,436.500L759.500,437.500L758.500,437.500M759.500,437.500L760.500,438.500L760.500,438.500L759.500,439.500L758.500,439.500L758.500,435.500M761.500,436.500L762.500,435.500L763.500,435.500L763.500,436.500L763.500,436.500L761.500,439.500L763.500,439.500" fill="none" stroke="#8a8a8a" stroke-width="0.800" stroke-linejoin="round" stroke-linecap="square"/><path d="M673.500,483.500L675.500,483.500M678.500,482.500L677.500,481.500L676.500,481.500L676.500,482.500L676.500,483.500L676.500,483.500L677.500,483.500L678.500,484.500L678.500,485.500L677.500,485.500L676.500,485.500L676.500,485.500M679.500,481.500L680.500,481.500L681.500,482.500L681.500,483.500L680.500,483.500L679.500,483.500M680.500,483.500L681.500,484.500L681.500,485.500L680.500,485.500L679.500,485.500L679.500,481.500M682.500,482.500L683.500,481.500L683.500,485.500M682.500,485.500L683.500,485.500" fill="none" stroke="#8a8a8a" stroke-width="0.800" stroke-linejoin="round" stroke-linecap="square"/><path d="M699.700,496h-6.200v3.700h4.300M699.700,496q3,0.500 3.700,3.500" fill="none" stroke="#00ff00" stroke-width="1"/><path d="M774,443.500h-1.500v10h3.700M777.500,443.800l4.200,8.500" fill="none" stroke="#00ff00" stroke-width="1"/><rect x="681" y="515.1" width="12" height="5" rx="2.500" fill="#000" stroke="#ffffff" stroke-width="1"/><path d="M685,515.1v5M689,515.1v5" stroke="#ffffff" stroke-width="1"/><rect x="874.4" y="559.6" width="12" height="5" rx="2.500" fill="#000" stroke="#ffffff" stroke-width="1"/><path d="M878.4,559.6v5M882.4,559.6v5" stroke="#ffffff" stroke-width="1"/><path d="M681.500,505V513.1" stroke="#ff0000" stroke-width="1"/><path d="M678.500,511.1h6l-3,5z" fill="#ff0000"/><path d="M874.500,550V557.500" stroke="#ff0000" stroke-width="1"/><path d="M871.500,555.500h6l-3,5z" fill="#ff0000"/><path d="M627.500,587.500V595.500" stroke="#ff0000" stroke-width="1"/><path d="M624.500,593.500h6l-3,5z" fill="#ff0000"/><path d="M858.500,560.500L858.500,564.500L860.500,564.500M862.500,564.500L862.500,560.500L864.500,560.500M862.500,562.500L863.500,562.500" fill="none" stroke="#5a5a5a" stroke-width="0.800" stroke-linejoin="round" stroke-linecap="square"/><circle cx="1092.4" cy="533.1" r="6.600" fill="none" stroke="#ffffff" stroke-width="1.15"/><path d="M1087.73,528.43L1097.07,537.77M1097.07,528.43L1087.73,537.77" stroke="#ffffff" stroke-width="1.100"/><circle cx="1141.4" cy="551.7" r="6.600" fill="none" stroke="#ffffff" stroke-width="1.15"/><path d="M1136.73,547.03L1146.07,556.37M1146.07,547.03L1136.73,556.37" stroke="#ffffff" stroke-width="1.100"/><path d="M1135.700,437.300L1141,448.900" stroke="#00ff00" stroke-width="4.200" fill="none"/><path d="M1135,437.500h6" stroke="#00ff00" stroke-width="2.400"/><path d="M1141.750,433.400l3.400,3.300l-3.400,3.300l-3.400,-3.300z" fill="#00ff00"/><path d="M1194.600,449L1200.200,460.800" stroke="#00ff00" stroke-width="4.200" fill="none"/><path d="M1194,449.200h6" stroke="#00ff00" stroke-width="2.400"/><path d="M1199.700,444.700l3.400,3.300l-3.400,3.300l-3.400,-3.300z" fill="#00ff00"/><path d="M1199.500,442.8L1199.500,448" stroke="#ffff00" stroke-width="1" fill="none"/><path d="M1199.500,461L1199.500,465.8" stroke="#ffff00" stroke-width="1" fill="none"/><path d="M1198,357h2l3,2.500l-3,2.500h-2z" fill="#000" stroke="#ffffff" stroke-width="1.200"/><rect x="1202" y="355" width="1" height="1" fill="#ffffff"/><path d="M1257,357h2l3,2.500l-3,2.500h-2z" fill="#000" stroke="#ffffff" stroke-width="1.200"/><rect x="1261" y="355" width="1" height="1" fill="#ffffff"/><path d="M1198,522.9h2l3,2.500l-3,2.500h-2z" fill="#000" stroke="#ffffff" stroke-width="1.200"/><rect x="1202" y="520.9" width="1" height="1" fill="#ffffff"/><path d="M1257,522.9h2l3,2.500l-3,2.500h-2z" fill="#000" stroke="#ffffff" stroke-width="1.200"/><rect x="1261" y="520.9" width="1" height="1" fill="#ffffff"/><rect x="1190.500" y="555.500" width="19" height="10" fill="#000" stroke="#00ff00"/><rect x="1249.500" y="555.500" width="18" height="10" fill="#000" stroke="#00ff00"/><path d="M1199.500,548.7L1199.500,555.500" stroke="#ffff00" stroke-width="1" fill="none"/><path d="M1199.500,566L1199.500,572.2" stroke="#ffff00" stroke-width="1" fill="none"/><path d="M1258.500,517.500L1258.500,531.7" stroke="#ffffff" stroke-width="1" fill="none"/><path d="M1258.500,353L1258.500,365.6" stroke="#ffffff" stroke-width="1" fill="none"/><rect x="1244.500" y="448.500" width="27" height="29" fill="none" stroke="#ffffff" stroke-width="1"/><path d="M1258.500,458.8L1258.500,467" stroke="#000" stroke-width="1.200" fill="none"/><path d="M1252.700,468.500h-4.200v-10h6.500M1255,458.700l3.700,8.500M1248.500,463.900h8" fill="none" stroke="#00ff00" stroke-width="1"/><path d="M1266.2,471L1276.6,485.4L1294.8,485.4" stroke="#ffffff" stroke-width="0.900" fill="none"/><rect x="1278" y="478.200" width="16.800" height="6.500" fill="#ffff00" opacity=".95"/><path d="M1280,479v5.500M1283.500,479v5.500M1287,479v5.500M1290.500,479v5.500" stroke="#000" stroke-width="0.700"/><path d="M1277.500,481.700h16.500" stroke="#000" stroke-width="0.500"/><path d="M648.500,341.6h6l-3,5z" fill="#ff0000"/><path d="M651.500,340v2" stroke="#ff0000" stroke-width="1"/><path d="M700.500,341.6h6l-3,5z" fill="#ff0000"/><path d="M703.500,340v2" stroke="#ff0000" stroke-width="1"/><path d="M844.500,380.3h6l-3,5z" fill="#ff0000"/><path d="M847.500,378.7v2" stroke="#ff0000" stroke-width="1"/><path d="M747.500,406.2h6l-3,5z" fill="#ff0000"/><path d="M750.500,404.6v2" stroke="#ff0000" stroke-width="1"/><path d="M778.500,418.9h6l-3,5z" fill="#ff0000"/><path d="M781.500,417.3v2" stroke="#ff0000" stroke-width="1"/><path d="M648.500,430.6h6l-3,5z" fill="#ff0000"/><path d="M651.500,429v2" stroke="#ff0000" stroke-width="1"/><path d="M747.500,431.6h6l-3,5z" fill="#ff0000"/><path d="M750.500,430v2" stroke="#ff0000" stroke-width="1"/><path d="M700.500,465h6l-3,5z" fill="#ff0000"/><path d="M703.500,463.4v2" stroke="#ff0000" stroke-width="1"/><path d="M747.500,477.1h6l-3,5z" fill="#ff0000"/><path d="M750.500,475.500v2" stroke="#ff0000" stroke-width="1"/><path d="M747.500,482.9h6l-3,5z" fill="#ff0000"/><path d="M750.500,481.3v2" stroke="#ff0000" stroke-width="1"/><path d="M648.500,421.8h6l-3,5z" fill="#ff0000"/><path d="M651.500,420.2v2" stroke="#ff0000" stroke-width="1"/><path d="M747.500,424.6h6l-3,5z" fill="#ff0000"/><path d="M750.500,423v2" stroke="#ff0000" stroke-width="1"/><path d="M648.500,484.6h6l-3,5z" fill="#ff0000"/><path d="M651.500,483v2" stroke="#ff0000" stroke-width="1"/><path d="M648.500,495.4h6l-3,5z" fill="#ff0000"/><path d="M651.500,493.8v2" stroke="#ff0000" stroke-width="1"/><path d="M700.500,514.9h6l-3,5z" fill="#ff0000"/><path d="M703.500,513.3v2" stroke="#ff0000" stroke-width="1"/><path d="M648.500,660.6h6l-3,5z" fill="#ff0000"/><path d="M651.500,659v2" stroke="#ff0000" stroke-width="1"/><path d="M1089.500,507.6h6l-3,5z" fill="#ff0000"/><path d="M1092.500,506v2" stroke="#ff0000" stroke-width="1"/><path d="M1138.500,423.4h6l-3,5z" fill="#ff0000"/><path d="M1141.500,421.8v2" stroke="#ff0000" stroke-width="1"/><path d="M1138.500,525.6h6l-3,5z" fill="#ff0000"/><path d="M1141.500,524v2" stroke="#ff0000" stroke-width="1"/><path d="M1196.500,347h6l-3,5z" fill="#ff0000"/><path d="M1199.500,345.4v2" stroke="#ff0000" stroke-width="1"/><path d="M1255.500,347h6l-3,5z" fill="#ff0000"/><path d="M1258.500,345.4v2" stroke="#ff0000" stroke-width="1"/><path d="M1196.500,384.500h6l-3,5z" fill="#ff0000"/><path d="M1199.500,382.9v2" stroke="#ff0000" stroke-width="1"/><path d="M1255.500,391.8h6l-3,5z" fill="#ff0000"/><path d="M1258.500,390.2v2" stroke="#ff0000" stroke-width="1"/><path d="M1196.500,436h6l-3,5z" fill="#ff0000"/><path d="M1199.500,434.4v2" stroke="#ff0000" stroke-width="1"/><path d="M1255.500,433.6h6l-3,5z" fill="#ff0000"/><path d="M1258.500,432v2" stroke="#ff0000" stroke-width="1"/><path d="M1196.500,489.2h6l-3,5z" fill="#ff0000"/><path d="M1199.500,487.6v2" stroke="#ff0000" stroke-width="1"/><path d="M1196.500,513.1h6l-3,5z" fill="#ff0000"/><path d="M1199.500,511.500v2" stroke="#ff0000" stroke-width="1"/><path d="M1196.500,541.9h6l-3,5z" fill="#ff0000"/><path d="M1199.500,540.3v2" stroke="#ff0000" stroke-width="1"/><path d="M1255.500,501.4h6l-3,5z" fill="#ff0000"/><path d="M1258.500,499.8v2" stroke="#ff0000" stroke-width="1"/><path d="M1255.500,512.9h6l-3,5z" fill="#ff0000"/><path d="M1258.500,511.3v2" stroke="#ff0000" stroke-width="1"/><path d="M1255.500,541.9h6l-3,5z" fill="#ff0000"/><path d="M1258.500,540.3v2" stroke="#ff0000" stroke-width="1"/><path d="M648.500,404.4h6l-3,5z" fill="#ff0000"/><path d="M651.500,402.8v2" stroke="#ff0000" stroke-width="1"/><rect x="663" y="348" width="1" height="1" fill="#00ffff"/><rect x="662.7" y="347.7" width="1.600" height="1.600" fill="#00ffff" opacity=".35"/><rect x="663" y="385" width="1" height="1" fill="#00ffff"/><rect x="662.7" y="384.7" width="1.600" height="1.600" fill="#00ffff" opacity=".35"/><rect x="715" y="347" width="1" height="1" fill="#00ffff"/><rect x="714.7" y="346.7" width="1.600" height="1.600" fill="#00ffff" opacity=".35"/><rect x="715" y="384" width="1" height="1" fill="#00ffff"/><rect x="714.7" y="383.7" width="1.600" height="1.600" fill="#00ffff" opacity=".35"/><rect x="859" y="387" width="1" height="1" fill="#00ffff"/><rect x="858.7" y="386.7" width="1.600" height="1.600" fill="#00ffff" opacity=".35"/><rect x="859" y="411" width="1" height="1" fill="#00ffff"/><rect x="858.7" y="410.7" width="1.600" height="1.600" fill="#00ffff" opacity=".35"/><rect x="663" y="437" width="1" height="1" fill="#00ffff"/><rect x="662.7" y="436.7" width="1.600" height="1.600" fill="#00ffff" opacity=".35"/><rect x="663" y="474" width="1" height="1" fill="#00ffff"/><rect x="662.7" y="473.7" width="1.600" height="1.600" fill="#00ffff" opacity=".35"/><rect x="761" y="438" width="1" height="1" fill="#00ffff"/><rect x="760.7" y="437.7" width="1.600" height="1.600" fill="#00ffff" opacity=".35"/><rect x="761" y="475" width="1" height="1" fill="#00ffff"/><rect x="760.7" y="474.7" width="1.600" height="1.600" fill="#00ffff" opacity=".35"/><rect x="664" y="521" width="1" height="1" fill="#00ffff"/><rect x="663.7" y="520.7" width="1.600" height="1.600" fill="#00ffff" opacity=".35"/><rect x="715" y="521" width="1" height="1" fill="#00ffff"/><rect x="714.7" y="520.7" width="1.600" height="1.600" fill="#00ffff" opacity=".35"/><rect x="664" y="583" width="1" height="1" fill="#00ffff"/><rect x="663.7" y="582.7" width="1.600" height="1.600" fill="#00ffff" opacity=".35"/><rect x="715" y="583" width="1" height="1" fill="#00ffff"/><rect x="714.7" y="582.7" width="1.600" height="1.600" fill="#00ffff" opacity=".35"/><rect x="654" y="667" width="1" height="1" fill="#00ffff"/><rect x="653.7" y="666.7" width="1.600" height="1.600" fill="#00ffff" opacity=".35"/><rect x="754" y="667" width="1" height="1" fill="#00ffff"/><rect x="753.7" y="666.7" width="1.600" height="1.600" fill="#00ffff" opacity=".35"/><rect x="801" y="667" width="1" height="1" fill="#00ffff"/><rect x="800.7" y="666.7" width="1.600" height="1.600" fill="#00ffff" opacity=".35"/><rect x="947" y="667" width="1" height="1" fill="#00ffff"/><rect x="946.7" y="666.7" width="1.600" height="1.600" fill="#00ffff" opacity=".35"/><rect x="996" y="667" width="1" height="1" fill="#00ffff"/><rect x="995.7" y="666.7" width="1.600" height="1.600" fill="#00ffff" opacity=".35"/><rect x="1148" y="667" width="1" height="1" fill="#00ffff"/><rect x="1147.7" y="666.7" width="1.600" height="1.600" fill="#00ffff" opacity=".35"/><rect x="1292" y="667" width="1" height="1" fill="#00ffff"/><rect x="1291.7" y="666.7" width="1.600" height="1.600" fill="#00ffff" opacity=".35"/><rect x="657" y="755" width="1" height="1" fill="#00ffff"/><rect x="656.7" y="754.7" width="1.600" height="1.600" fill="#00ffff" opacity=".35"/><rect x="755" y="755" width="1" height="1" fill="#00ffff"/><rect x="754.7" y="754.7" width="1.600" height="1.600" fill="#00ffff" opacity=".35"/><rect x="804" y="755" width="1" height="1" fill="#00ffff"/><rect x="803.7" y="754.7" width="1.600" height="1.600" fill="#00ffff" opacity=".35"/><rect x="950" y="755" width="1" height="1" fill="#00ffff"/><rect x="949.7" y="754.7" width="1.600" height="1.600" fill="#00ffff" opacity=".35"/><rect x="999" y="754" width="1" height="1" fill="#00ffff"/><rect x="998.7" y="753.7" width="1.600" height="1.600" fill="#00ffff" opacity=".35"/><rect x="1148" y="754" width="1" height="1" fill="#00ffff"/><rect x="1147.7" y="753.7" width="1.600" height="1.600" fill="#00ffff" opacity=".35"/><rect x="1292" y="754" width="1" height="1" fill="#00ffff"/><rect x="1291.7" y="753.7" width="1.600" height="1.600" fill="#00ffff" opacity=".35"/><rect x="608" y="752" width="1" height="1" fill="#00ffff"/><rect x="607.7" y="751.7" width="1.600" height="1.600" fill="#00ffff" opacity=".35"/><path d="M553.500,314.500L552.500,312.500L550.500,312.500L549.500,314.500L549.500,319.500L550.500,320.500L552.500,320.500L553.500,319.500M560.500,314.500L559.500,312.500L557.500,312.500L556.500,314.500L556.500,319.500L557.500,320.500L559.500,320.500L560.500,319.500L560.500,317.500L559.500,316.500L556.500,316.500M567.500,312.500L563.500,312.500L563.500,316.500L566.500,316.500L567.500,317.500L567.500,319.500L566.500,320.500L564.500,320.500L563.500,319.500M570.500,312.500L570.500,320.500M574.500,312.500L574.500,320.500M570.500,316.500L574.500,316.500M577.500,316.500L581.500,316.500M584.500,312.500L587.500,312.500L588.500,314.500L588.500,319.500L587.500,320.500L584.500,320.500L584.500,312.500M595.500,314.500L594.500,312.500L592.500,312.500L591.500,314.500L591.500,319.500L592.500,320.500L594.500,320.500L595.500,319.500M598.500,316.500L602.500,316.500M609.500,314.500L608.500,312.500L606.500,312.500L605.500,314.500L605.500,319.500L606.500,320.500L608.500,320.500L609.500,319.500M616.500,314.500L615.500,312.500L613.500,312.500L612.500,314.500L612.500,319.500L613.500,320.500L615.500,320.500L616.500,319.500L616.500,317.500L615.500,316.500L612.500,316.500M619.500,320.500L619.500,315.500L621.500,312.500L623.500,315.500L623.500,320.500M619.500,317.500L623.500,317.500M626.500,320.500L630.500,312.500M633.500,314.500L634.500,312.500L636.500,312.500L637.500,314.500L637.500,315.500L633.500,320.500L637.500,320.500M640.500,320.500L640.500,312.500L643.500,312.500L644.500,314.500L644.500,315.500L643.500,316.500L640.500,316.500" fill="none" stroke="#ff0000" stroke-width="1.0" stroke-linejoin="round" stroke-linecap="square"/><path d="M553.500,338.500L552.500,337.500L550.500,337.500L549.500,338.500L549.500,343.500L550.500,344.500L552.500,344.500L553.500,343.500M560.500,338.500L559.500,337.500L557.500,337.500L556.500,338.500L556.500,343.500L557.500,344.500L559.500,344.500L560.500,343.500L560.500,341.500L559.500,340.500L556.500,340.500M567.500,337.500L563.500,337.500L563.500,340.500L566.500,340.500L567.500,341.500L567.500,343.500L566.500,344.500L564.500,344.500L563.500,343.500M570.500,337.500L570.500,344.500M574.500,337.500L574.500,344.500M570.500,341.500L574.500,341.500M577.500,341.500L581.500,341.500M584.500,337.500L587.500,337.500L588.500,338.500L588.500,343.500L587.500,344.500L584.500,344.500L584.500,337.500M595.500,338.500L594.500,337.500L592.500,337.500L591.500,338.500L591.500,343.500L592.500,344.500L594.500,344.500L595.500,343.500M598.500,341.500L602.500,341.500M609.500,338.500L608.500,337.500L606.500,337.500L605.500,338.500L605.500,343.500L606.500,344.500L608.500,344.500L609.500,343.500M616.500,338.500L615.500,337.500L613.500,337.500L612.500,338.500L612.500,343.500L613.500,344.500L615.500,344.500L616.500,343.500L616.500,341.500L615.500,340.500L612.500,340.500M619.500,344.500L619.500,339.500L621.500,337.500L623.500,339.500L623.500,344.500M619.500,341.500L623.500,341.500M626.500,344.500L630.500,337.500M633.500,338.500L634.500,337.500L636.500,337.500L637.500,338.500L637.500,339.500L633.500,344.500L637.500,344.500M640.500,344.500L640.500,337.500L643.500,337.500L644.500,338.500L644.500,339.500L643.500,341.500L640.500,341.500" fill="none" stroke="#ff0000" stroke-width="1.0" stroke-linejoin="round" stroke-linecap="square"/><path d="M691.500,358.500L691.500,353.500L693.500,351.500L695.500,353.500L695.500,358.500M691.500,355.500L695.500,355.500M698.500,351.500L701.500,351.500L702.500,352.500L702.500,357.500L701.500,358.500L698.500,358.500L698.500,351.500M704.500,358.500L704.500,353.500L706.500,351.500L708.500,353.500L708.500,358.500M704.500,355.500L708.500,355.500M711.500,354.500L715.500,354.500M718.500,357.500L719.500,358.500L721.500,358.500L722.500,357.500L722.500,352.500L721.500,351.500L719.500,351.500L718.500,352.500L718.500,354.500L719.500,355.500L722.500,355.500M725.500,358.500L725.500,353.500L727.500,351.500L729.500,353.500L729.500,358.500M725.500,355.500L729.500,355.500M732.500,351.500L734.500,351.500L735.500,352.500L735.500,357.500L734.500,358.500L732.500,358.500L731.500,357.500L731.500,352.500L732.500,351.500M731.500,357.500L735.500,352.500M739.500,352.500L740.500,351.500L740.500,358.500M739.500,358.500L741.500,358.500M749.500,352.500L748.500,351.500L746.500,351.500L745.500,352.500L745.500,357.500L746.500,358.500L748.500,358.500L749.500,357.500L749.500,355.500L748.500,354.500L745.500,354.500M752.500,354.500L756.500,354.500M758.500,352.500L759.500,351.500L761.500,351.500L762.500,352.500L762.500,353.500L761.500,354.500L760.500,354.500M761.500,354.500L762.500,356.500L762.500,357.500L761.500,358.500L759.500,358.500L758.500,357.500" fill="none" stroke="#ff0000" stroke-width="1.0" stroke-linejoin="round" stroke-linecap="square"/><path d="M720.500,448.500L720.500,444.500L722.500,441.500L724.500,444.500L724.500,448.500M720.500,445.500L724.500,445.500M727.500,441.500L730.500,441.500L731.500,442.500L731.500,447.500L730.500,448.500L727.500,448.500L727.500,441.500M734.500,448.500L734.500,444.500L736.500,441.500L738.500,444.500L738.500,448.500M734.500,445.500L738.500,445.500M741.500,442.500L742.500,441.500L744.500,441.500L745.500,442.500L745.500,444.500L741.500,448.500L745.500,448.500M748.500,442.500L749.500,441.500L751.500,441.500L752.500,442.500L752.500,444.500L748.500,448.500L752.500,448.500M755.500,448.500L755.500,441.500L758.500,441.500L759.500,442.500L759.500,444.500L758.500,445.500L755.500,445.500M763.500,441.500L764.500,441.500L764.500,448.500M763.500,448.500L765.500,448.500M769.500,444.500L772.500,444.500L773.500,445.500L773.500,448.500M773.500,446.500L770.500,446.500L769.500,447.500L769.500,447.500L770.500,448.500L772.500,448.500L773.500,447.500M776.500,441.500L776.500,448.500L779.500,448.500L780.500,447.500L780.500,445.500L779.500,444.500L776.500,444.500M783.500,448.500L787.500,441.500M790.500,448.500L790.500,441.500L793.500,441.500L794.500,442.500L794.500,444.500L793.500,445.500L790.500,445.500M792.500,445.500L794.500,448.500" fill="none" stroke="#ff0000" stroke-width="1.0" stroke-linejoin="round" stroke-linecap="square"/><path d="M641.500,494.500L641.500,490.500L643.500,487.500L645.500,490.500L645.500,494.500M641.500,491.500L645.500,491.500M648.500,487.500L651.500,487.500L652.500,488.500L652.500,493.500L651.500,494.500L648.500,494.500L648.500,487.500M655.500,494.500L655.500,490.500L657.500,487.500L659.500,490.500L659.500,494.500M655.500,491.500L659.500,491.500M662.500,488.500L663.500,487.500L665.500,487.500L666.500,488.500L666.500,490.500L662.500,494.500L666.500,494.500M669.500,488.500L670.500,487.500L672.500,487.500L673.500,488.500L673.500,490.500L669.500,494.500L673.500,494.500M676.500,494.500L676.500,487.500L679.500,487.500L680.500,488.500L680.500,490.500L679.500,491.500L676.500,491.500M684.500,487.500L685.500,487.500L685.500,494.500M684.500,494.500L686.500,494.500M691.500,490.500L693.500,490.500L694.500,491.500L694.500,494.500M694.500,492.500L691.500,492.500L690.500,493.500L690.500,493.500L691.500,494.500L693.500,494.500L694.500,493.500M697.500,487.500L697.500,494.500L700.500,494.500L701.500,493.500L701.500,491.500L700.500,490.500L697.500,490.500M704.500,494.500L708.500,487.500M715.500,488.500L714.500,487.500L712.500,487.500L711.500,488.500L711.500,493.500L712.500,494.500L714.500,494.500L715.500,493.500L715.500,491.500L713.500,491.500" fill="none" stroke="#ff0000" stroke-width="1.0" stroke-linejoin="round" stroke-linecap="square"/><path d="M654.500,521.500L656.500,524.500L658.500,521.500M656.500,524.500L656.500,528.500M660.500,521.500L662.500,524.500L664.500,521.500M662.500,524.500L662.500,528.500M668.500,522.500L669.500,521.500L669.500,528.500M668.500,528.500L670.500,528.500M674.500,524.500L678.500,524.500M680.500,521.500L683.500,521.500L684.500,522.500L684.500,527.500L683.500,528.500L680.500,528.500L680.500,521.500" fill="none" stroke="#ff0000" stroke-width="1.0" stroke-linejoin="round" stroke-linecap="square"/><path d="M1077.500,540.500L1077.500,536.500L1079.500,533.500L1082.500,536.500L1082.500,540.500M1077.500,537.500L1082.500,537.500M1084.500,533.500L1088.500,533.500L1089.500,534.500L1089.500,539.500L1088.500,540.500L1084.500,540.500L1084.500,533.500M1092.500,540.500L1092.500,536.500L1094.500,533.500L1096.500,536.500L1096.500,540.500M1092.500,537.500L1096.500,537.500M1099.500,534.500L1100.500,533.500L1102.500,533.500L1103.500,534.500L1103.500,536.500L1099.500,540.500L1103.500,540.500M1106.500,534.500L1107.500,533.500L1109.500,533.500L1110.500,534.500L1110.500,536.500L1106.500,540.500L1110.500,540.500M1113.500,533.500L1116.500,533.500L1118.500,534.500L1118.500,539.500L1116.500,540.500L1113.500,540.500L1113.500,533.500M1120.500,533.500L1123.500,537.500L1125.500,533.500M1123.500,537.500L1123.500,540.500" fill="none" stroke="#ff0000" stroke-width="1.0" stroke-linejoin="round" stroke-linecap="square"/><path d="M1126.500,559.500L1126.500,554.500L1128.500,552.500L1130.500,554.500L1130.500,559.500M1126.500,556.500L1130.500,556.500M1133.500,552.500L1137.500,552.500L1138.500,553.500L1138.500,558.500L1137.500,559.500L1133.500,559.500L1133.500,552.500M1141.500,559.500L1141.500,554.500L1143.500,552.500L1145.500,554.500L1145.500,559.500M1141.500,556.500L1145.500,556.500M1148.500,553.500L1149.500,552.500L1152.500,552.500L1153.500,553.500L1153.500,554.500L1148.500,559.500L1153.500,559.500M1155.500,553.500L1157.500,552.500L1159.500,552.500L1160.500,553.500L1160.500,554.500L1155.500,559.500L1160.500,559.500M1163.500,552.500L1166.500,552.500L1167.500,553.500L1167.500,558.500L1166.500,559.500L1163.500,559.500L1163.500,552.500M1170.500,552.500L1170.500,559.500L1173.500,557.500L1175.500,559.500L1175.500,552.500" fill="none" stroke="#ff0000" stroke-width="1.0" stroke-linejoin="round" stroke-linecap="square"/><path d="M1175.500,564.500L1178.500,564.500L1179.500,566.500L1179.500,570.500L1178.500,571.500L1175.500,571.500L1175.500,564.500M1182.500,564.500L1186.500,564.500L1182.500,571.500L1186.500,571.500M1189.500,564.500L1191.500,568.500L1193.500,564.500M1191.500,568.500L1191.500,571.500M1196.500,568.500L1200.500,568.500M1203.500,566.500L1204.500,564.500L1206.500,564.500L1208.500,566.500L1208.500,567.500L1203.500,571.500L1208.500,571.500M1211.500,564.500L1213.500,564.500L1215.500,566.500L1215.500,570.500L1213.500,571.500L1211.500,571.500L1210.500,570.500L1210.500,566.500L1211.500,564.500M1210.500,570.500L1215.500,566.500M1221.500,571.500L1221.500,564.500L1217.500,569.500L1222.500,569.500" fill="none" stroke="#ff0000" stroke-width="1.0" stroke-linejoin="round" stroke-linecap="square"/><path d="M1231.500,466.500L1235.500,473.500M1235.500,466.500L1231.500,473.500M1242.500,466.500L1242.500,472.500L1241.500,473.500L1239.500,473.500L1238.500,472.500M1244.500,473.500L1244.500,469.500L1246.500,466.500L1248.500,469.500L1248.500,473.500M1244.500,470.500L1248.500,470.500M1251.500,470.500L1255.500,470.500M1258.500,467.500L1259.500,466.500L1259.500,473.500M1258.500,473.500L1260.500,473.500M1267.500,467.500L1266.500,466.500L1264.500,466.500L1264.500,467.500L1264.500,469.500L1264.500,470.500L1266.500,470.500L1267.500,471.500L1267.500,472.500L1266.500,473.500L1264.500,473.500L1264.500,472.500M1273.500,466.500L1272.500,467.500L1272.500,472.500L1273.500,473.500M1276.500,466.500L1280.500,473.500M1280.500,466.500L1276.500,473.500M1287.500,466.500L1287.500,472.500L1286.500,473.500L1284.500,473.500L1283.500,472.500M1289.500,473.500L1289.500,469.500L1291.500,466.500L1293.500,469.500L1293.500,473.500M1289.500,470.500L1293.500,470.500M1296.500,470.500L1300.500,470.500M1303.500,467.500L1304.500,466.500L1304.500,473.500M1303.500,473.500L1305.500,473.500M1313.500,467.500L1312.500,466.500L1310.500,466.500L1309.500,467.500L1309.500,469.500L1310.500,470.500L1312.500,470.500L1313.500,471.500L1313.500,472.500L1312.500,473.500L1310.500,473.500L1309.500,472.500M1315.500,466.500L1318.500,466.500L1319.500,467.500L1319.500,469.500L1318.500,470.500L1315.500,470.500M1318.500,470.500L1319.500,471.500L1319.500,472.500L1318.500,473.500L1315.500,473.500L1315.500,466.500M1322.500,473.500L1322.500,466.500L1324.500,466.500L1325.500,467.500L1325.500,469.500L1324.500,470.500L1322.500,470.500M1323.500,470.500L1325.500,473.500M1328.500,466.500L1331.500,466.500L1332.500,467.500L1332.500,469.500L1331.500,470.500L1328.500,470.500M1331.500,470.500L1332.500,471.500L1332.500,472.500L1331.500,473.500L1328.500,473.500L1328.500,466.500M1335.500,466.500L1336.500,467.500L1336.500,472.500L1335.500,473.500" fill="none" stroke="#ff0000" stroke-width="1.0" stroke-linejoin="round" stroke-linecap="square"/><circle cx="1038" cy="743.800" r="4.800" fill="#5a5a5a" stroke="#b0b0b0" stroke-width="0.900"/></svg>
<div style="left:1515px;top:73px;width:267px;height:124px;background:#f0f0f0;border:1px solid #9a9a9a;box-shadow:0 1px 6px rgba(0,0,0,.35)"></div>
<div style="left:1516px;top:74px;width:265px;height:31px;background:#fff"></div>
<div style="left:1532px;top:114px;width:110px;height:26px;border-top:1px solid #a0a0a0;border-left:1px solid #a0a0a0;border-right:1px solid #fff;border-bottom:1px solid #fff;"></div>
<div style="left:1532px;top:149px;width:110px;height:26px;border-top:1px solid #a0a0a0;border-left:1px solid #a0a0a0;border-right:1px solid #fff;border-bottom:1px solid #fff;"></div>
<div style="left:1535px;top:117px;width:20px;height:20px;background:linear-gradient(#f9b163 0%,#fbc583 45%,#fee9a8 100%);border:1px solid #3a78d8;"></div>
<div style="left:1535px;top:152px;width:20px;height:20px;background:linear-gradient(#f9b163 0%,#fbc583 45%,#fee9a8 100%);border:1px solid #3a78d8;"></div>
<svg class="L" width="1920" height="1030" viewBox="0 0 1920 1030"><path d="M1522,83q1,-3 3,-2l1,4q1,-5 3,-4t2,6q2,3 3,8q0,3 -4,3h-3q-4,-2 -5,-8z" fill="#b8b8b8" stroke="#8a8a8a" stroke-width="0.700"/><path d="M1525,86l2,5M1529,85l1,6" stroke="#e8e8e8" stroke-width="1.200"/><g fill="#9a9a9a"><text x="1542.70" y="95.00" font-size="16.4">选择元</text></g><text x="1592.300" y="95" font-size="14" fill="#9a9a9a" textLength="7.500" lengthAdjust="spacingAndGlyphs">...</text><path d="M1628,88.500h12" stroke="#7a7a7a"/><rect x="1686.500" y="83.500" width="11" height="11" fill="none" stroke="#dcdcdc"/><path d="M1745,83l12,12M1757,83l-12,12" stroke="#555" stroke-width="1.100"/><circle cx="1544.800" cy="127.3" r="3.800" fill="#e8f4ff" stroke="#2a72f0" stroke-width="1.400"/><path d="M1538,127.3h13.600M1544.800,120.3v14" stroke="#2a72f0" stroke-width="1.200"/><rect x="1560.200" y="123.3" width="10" height="8" fill="#fff" stroke="#2a72f0" stroke-width="1.400"/><path d="M1579.500,130.8l3.500,-7h10l-3.500,7z" fill="#fff" stroke="#2a72f0" stroke-width="1.400"/><circle cx="1607.200" cy="127.3" r="5.200" fill="#fff" stroke="#2a72f0" stroke-width="1.400"/><path d="M1624,132.3l10,-10" stroke="#5a6ab0" stroke-width="1.200"/><path d="M1544.500,153.9v16M1537,161.9h15M1539,155.9l11,11M1550,155.9l-11,11" stroke="#2a8af8" stroke-width="1"/><path d="M1544,161.9v8l2,-2l1.500,3.500l1.500,-0.700l-1.500,-3.300h3z" fill="#fff" stroke="#2a5ae8" stroke-width="0.700"/><path d="M1563.300,155.9h4v4h4v4h-4v4h-4v-4h-4v-4h4z" fill="#fff" stroke="#2a72f0" stroke-width="1.400"/><rect x="1580.500" y="160.1" width="11.500" height="3.600" rx="1.500" fill="#fff" stroke="#2a72f0" stroke-width="1.300"/><rect x="1602.500" y="156.9" width="10" height="10" fill="#fff" stroke="#2a72f0" stroke-width="1.200"/><path d="M1602.500,166.9l10,-10v10z" fill="#1a50e8"/><circle cx="1628.500" cy="161.4" r="6" fill="#2a6ae0"/><path d="M1625,157.9q3,-2 5,0t1,4q-3,1 -4,-1z" fill="#3ab050"/><path d="M1624,162.9q2,0 3,3l-2,1z" fill="#e8d850"/><path d="M1629,161.9v7l1.500,-1.500l1.200,2.800l1.300,-0.600l-1.200,-2.700h2.200z" fill="#fff" stroke="#2a5ae8" stroke-width="0.600"/><defs><linearGradient id="bsq" x1="0" y1="0" x2="1" y2="1"><stop offset="0" stop-color="#c8d8ff"/><stop offset="1" stop-color="#5a7ae8"/></linearGradient></defs><rect x="1701.700" y="123" width="10" height="10" fill="url(#bsq)" stroke="#2a82f8" stroke-width="1"/><path d="M1702,123.300l9.500,9.500" stroke="#b06a8a" stroke-width="1.500"/><circle cx="1706.700" cy="128" r="8.800" fill="none" stroke="#e58e8e" stroke-width="2.200"/><rect x="1698.500" y="153" width="15" height="15.500" fill="#d0d0d0" stroke="#bcbcbc"/><path d="M1704.500,158v14l3.300,-3l2.200,5l2.200,-1l-2.200,-4.800h4.500z" fill="#7a7a7a"/><path d="M1747.0,172.0h8l-4.0,5z" fill="#000"/></svg>
<div style="left:0px;top:962px;width:1920px;height:68px;background:#f0f0f0"></div>
<div style="left:0px;top:962px;width:152px;height:34px;background:linear-gradient(#ffffff 0%,#f4f4f4 50%,#dcdcdc 100%);border-right:1px solid #c8c8c8;border-radius:5px 0 0 5px"></div>
<div style="left:153px;top:962px;width:148px;height:34px;background:linear-gradient(#ffffff 0%,#f4f4f4 50%,#dcdcdc 100%);border-right:1px solid #c8c8c8"></div>
<div style="left:302px;top:962px;width:146px;height:34px;background:linear-gradient(#ffffff 0%,#f4f4f4 50%,#dcdcdc 100%);border-right:1px solid #d0d0d0;border-radius:0 0 5px 0"></div>
<div style="left:28px;top:969px;width:119px;height:21px;background:#fff;border:1px solid #adadad;"></div>
<div style="left:177px;top:969px;width:119px;height:21px;background:#fff;border:1px solid #adadad;"></div>
<div style="left:326px;top:969px;width:119px;height:21px;background:#fff;border:1px solid #adadad;"></div>
<div style="left:0px;top:996px;width:1920px;height:1px;background:#a0a0a0"></div>
<div style="left:0px;top:997px;width:1920px;height:33px;background:#f0f0f0;border-left:1px solid #a0a0a0"></div>
<div style="left:267px;top:998px;width:35px;height:31px;border-top:1px solid #a0a0a0;border-left:1px solid #a0a0a0;border-right:1px solid #fff;border-bottom:1px solid #fff;"></div>
<div style="left:1310px;top:998px;width:36px;height:32px;border-top:1px solid #a0a0a0;border-left:1px solid #a0a0a0;border-right:1px solid #fff;border-bottom:1px solid #fff;"></div>
<div style="left:1347px;top:998px;width:35px;height:32px;border-top:1px solid #a0a0a0;border-left:1px solid #a0a0a0;border-right:1px solid #fff;border-bottom:1px solid #fff;"></div>
<div style="left:1383px;top:998px;width:149px;height:32px;border-top:1px solid #a0a0a0;border-left:1px solid #a0a0a0;border-right:1px solid #fff;border-bottom:1px solid #fff;"></div>
<div style="left:1533px;top:998px;width:134px;height:32px;border-top:1px solid #a0a0a0;border-left:1px solid #a0a0a0;border-right:1px solid #fff;border-bottom:1px solid #fff;"></div>
<div style="left:1668px;top:998px;width:35px;height:32px;border-top:1px solid #a0a0a0;border-left:1px solid #a0a0a0;border-right:1px solid #fff;border-bottom:1px solid #fff;"></div>
<div style="left:1704px;top:998px;width:35px;height:32px;border-top:1px solid #a0a0a0;border-left:1px solid #a0a0a0;border-right:1px solid #fff;border-bottom:1px solid #fff;"></div>
<div style="left:1740px;top:998px;width:35px;height:32px;border-top:1px solid #a0a0a0;border-left:1px solid #a0a0a0;border-right:1px solid #fff;border-bottom:1px solid #fff;"></div>
<div style="left:1776px;top:998px;width:35px;height:32px;border-top:1px solid #a0a0a0;border-left:1px solid #a0a0a0;border-right:1px solid #fff;border-bottom:1px solid #fff;"></div>
<div style="left:1812px;top:998px;width:35px;height:32px;border-top:1px solid #a0a0a0;border-left:1px solid #a0a0a0;border-right:1px solid #fff;border-bottom:1px solid #fff;"></div>
<div style="left:1848px;top:998px;width:35px;height:32px;border-top:1px solid #a0a0a0;border-left:1px solid #a0a0a0;border-right:1px solid #fff;border-bottom:1px solid #fff;"></div>
<div style="left:1884px;top:998px;width:35px;height:32px;border-top:1px solid #a0a0a0;border-left:1px solid #a0a0a0;border-right:1px solid #fff;border-bottom:1px solid #fff;"></div>
<svg class="L" width="1920" height="1030" viewBox="0 0 1920 1030"><rect x="4" y="971" width="2" height="2" fill="#b8b8b8"/><rect x="4" y="975" width="2" height="2" fill="#b8b8b8"/><rect x="4" y="979" width="2" height="2" fill="#b8b8b8"/><rect x="4" y="983" width="2" height="2" fill="#b8b8b8"/><rect x="4" y="987" width="2" height="2" fill="#b8b8b8"/><text x="10.8" y="984.800" font-size="16.300" font-weight="bold" fill="#000">X</text><text x="159.8" y="984.800" font-size="16.300" font-weight="bold" fill="#000">Y</text><text x="308.8" y="984.800" font-size="16.300" font-weight="bold" fill="#000">Z</text><g fill="#808080"><text x="34.40" y="984.80" font-size="13.6" textLength="59.00" lengthAdjust="spacingAndGlyphs">238.4437</text></g><g fill="#808080"><text x="183.20" y="984.80" font-size="13.6" textLength="51.30" lengthAdjust="spacingAndGlyphs">78.1863</text></g><g fill="#808080"><text x="331.80" y="984.80" font-size="13.6" textLength="43.80" lengthAdjust="spacingAndGlyphs">0.0000</text></g><g fill="#000"><text x="3.80" y="1019.30" font-size="13.7">选择元素</text></g><g fill="#000"><text x="64.00" y="1019.30" font-size="13.4">&gt;</text></g><g fill="#000"><text x="75.50" y="1019.30" font-size="13.7">标识要添加到选择集中的元素</text></g><rect x="251" y="998" width="7.500" height="31" fill="#f0f0f0"/><rect x="260" y="1000" width="2" height="2" fill="#b8b8b8"/><rect x="260" y="1004" width="2" height="2" fill="#b8b8b8"/><rect x="260" y="1008" width="2" height="2" fill="#b8b8b8"/><rect x="260" y="1012" width="2" height="2" fill="#b8b8b8"/><rect x="260" y="1016" width="2" height="2" fill="#b8b8b8"/><rect x="260" y="1020" width="2" height="2" fill="#b8b8b8"/><rect x="260" y="1024" width="2" height="2" fill="#b8b8b8"/><g fill="#eef" stroke="#1a40c0" stroke-width="1"><path d="M1318,1021q10,2 13,-2l5,-15" fill="none" stroke="#333"/><circle cx="1318.500" cy="1021" r="2.500"/><circle cx="1333" cy="1019.500" r="2.500"/><circle cx="1336.500" cy="1005" r="2.500"/></g><g><path d="M1360.500,1011v-2q0,-2 2.500,-2t2.500,2v2" fill="none" stroke="#555" stroke-width="1.200"/><rect x="1358" y="1011" width="10.500" height="6" fill="#c8b820" stroke="#6a6010" stroke-width="0.700"/><rect x="1358" y="1011" width="10.500" height="2" fill="#f0e060"/></g><g fill="#000"><text x="1385.00" y="1019.00" font-size="14.5" textLength="45.00" lengthAdjust="spacingAndGlyphs">Default</text></g><g fill="#f4f4fa" stroke="#8a8aa8" stroke-width="1"><path d="M1752,1007h9q1.500,0 1.500,2v2h-3l-3,6q-1,2 0,2h-7q-1.500,-1 0,-3l3,-6q1,-2 -0.500,-3z"/><path d="M1759,1016h3q1,2 -0.500,3h-4" /></g><g><path d="M1786,1010h14v9h-14z" fill="#f4f4f4" stroke="#ccc" stroke-width="0.500"/><rect x="1791.500" y="1014" width="3" height="5" fill="#3a3ab0"/><path d="M1783.500,1012l9.500,-8l9.500,8l-2,1.500l-7.500,-6l-7.500,6z" fill="#f0a010"/><rect x="1797" y="1005" width="2.500" height="4" fill="#f0a010"/></g><g fill="none" stroke="#9a9a9a" stroke-width="1"><path d="M1858.500,1005.500l13,-1l-0.500,14l-12,-2.500z" fill="#fafafa"/><path d="M1861.500,1009.500l6.500,-0.500v7l-6,-1z" fill="#e8e8e8" stroke="#777"/></g><g><rect x="1893" y="1005" width="16" height="16" fill="#bdbdbd"/><circle cx="1901" cy="1010.500" r="3.600" fill="#e4e4e4"/><path d="M1894,1021q0,-7 7,-7t7,7z" fill="#e4e4e4"/></g></svg>
</div></body></html>
